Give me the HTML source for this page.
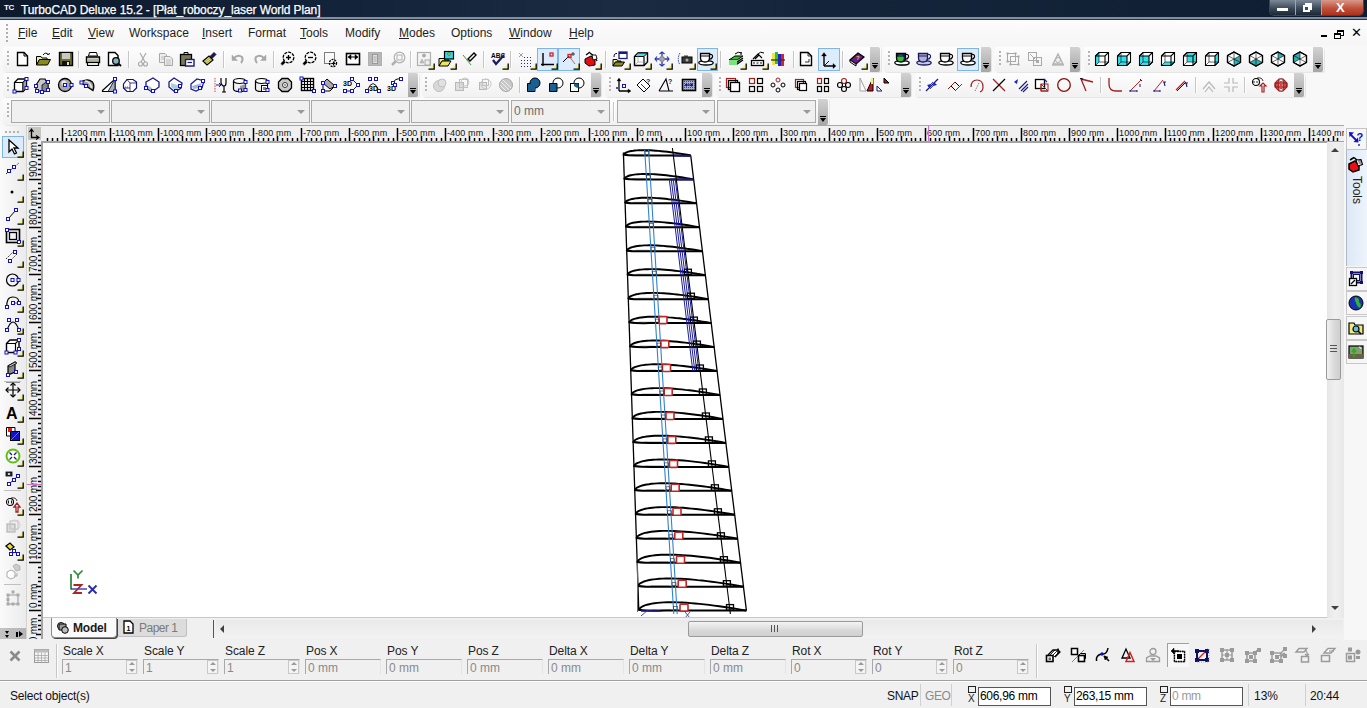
<!DOCTYPE html><html><head><meta charset="utf-8"><style>
*{box-sizing:border-box}
body{margin:0;width:1367px;height:708px;overflow:hidden;position:relative;background:#f0f0f0;font-family:"Liberation Sans",sans-serif;font-size:12px;color:#000}
.a{position:absolute}
.t{position:absolute;white-space:nowrap;line-height:1}
.ic{position:absolute;width:16px;height:16px;overflow:visible}
.grip{position:absolute;width:3px}
.sep{position:absolute;width:1px;background:#c8c8c8}
.hdl{position:absolute;width:10px;background:linear-gradient(#d2d2d2,#a6a6a6);border-radius:0 2px 2px 0}
.tb{position:absolute;background:linear-gradient(#fdfdfd,#f1f1f1);border-radius:3px;box-shadow:1px 1px 0 #e6e6e6}
.cb{position:absolute;height:23px;border:1px solid #a9a9a9;background:#f0f0f0}
.arr{position:absolute;width:0;height:0;border-left:4px solid transparent;border-right:4px solid transparent;border-top:4px solid #999}

</style></head><body>
<div class="a" style="left:0;top:0;width:1367px;height:17px;background:linear-gradient(90deg,#0d1a2d 0%,#13233a 25%,#1b2c42 45%,#14253b 60%,#0f1d31 100%)"></div>
<div class="a" style="left:0;top:17px;width:1367px;height:2px;background:#7f8fa1"></div>
<div class="a" style="left:0;top:19px;width:1367px;height:1px;background:#2a3442"></div>
<div class="t" style="left:4px;top:4px;font-size:8px;font-weight:700;color:#fff;letter-spacing:-0.5px">TC</div>
<div class="t" style="left:21px;top:4px;font-size:12px;color:#fff;letter-spacing:-0.1px;-webkit-text-stroke:0.25px #fff">TurboCAD Deluxe 15.2 - [Płat_roboczy_laser World Plan]</div>
<div class="a" style="left:1269px;top:0;width:95px;height:16px;border:1px solid #3a4656;border-top:none;border-radius:0 0 5px 5px;overflow:hidden"><div class="a" style="left:0;top:0;width:25px;height:15px;background:linear-gradient(#7a8898,#3c4a5a 55%,#1c2838)"></div><div class="a" style="left:25px;top:0;width:1px;height:15px;background:#9aa6b4"></div><div class="a" style="left:26px;top:0;width:25px;height:15px;background:linear-gradient(#7a8898,#3c4a5a 55%,#1c2838)"></div><div class="a" style="left:51px;top:0;width:1px;height:15px;background:#9aa6b4"></div><div class="a" style="left:52px;top:0;width:42px;height:15px;background:linear-gradient(#d89a8a,#c0503a 55%,#b0301a)"></div><div class="a" style="left:7px;top:8px;width:11px;height:3px;background:#fff"></div><div class="a" style="left:35px;top:3px;width:7px;height:7px;border:2px solid #fff"></div><div class="a" style="left:33px;top:5px;width:7px;height:7px;border:2px solid #fff;background:#3c4a5a"></div><div class="t" style="left:66px;top:1px;font-size:13px;font-weight:700;color:#fff">X</div></div>
<div class="a" style="left:0;top:20px;width:1367px;height:26px;background:linear-gradient(#fcfcfc,#f6f6f6)"></div>
<div class="a" style="left:6px;top:24px;width:2px;height:2px;background:#aeaeae"></div><div class="a" style="left:6px;top:28px;width:2px;height:2px;background:#aeaeae"></div><div class="a" style="left:6px;top:32px;width:2px;height:2px;background:#aeaeae"></div><div class="a" style="left:6px;top:36px;width:2px;height:2px;background:#aeaeae"></div><div class="a" style="left:6px;top:40px;width:2px;height:2px;background:#aeaeae"></div>
<div class="t" style="left:18px;top:27px;font-size:12px;color:#1e1e1e"><u>F</u>ile</div>
<div class="t" style="left:52px;top:27px;font-size:12px;color:#1e1e1e"><u>E</u>dit</div>
<div class="t" style="left:88px;top:27px;font-size:12px;color:#1e1e1e"><u>V</u>iew</div>
<div class="t" style="left:129px;top:27px;font-size:12px;color:#1e1e1e">Workspace</div>
<div class="t" style="left:202px;top:27px;font-size:12px;color:#1e1e1e"><u>I</u>nsert</div>
<div class="t" style="left:248px;top:27px;font-size:12px;color:#1e1e1e">Format</div>
<div class="t" style="left:300px;top:27px;font-size:12px;color:#1e1e1e"><u>T</u>ools</div>
<div class="t" style="left:345px;top:27px;font-size:12px;color:#1e1e1e">Modify</div>
<div class="t" style="left:399px;top:27px;font-size:12px;color:#1e1e1e"><u>M</u>odes</div>
<div class="t" style="left:451px;top:27px;font-size:12px;color:#1e1e1e">Options</div>
<div class="t" style="left:509px;top:27px;font-size:12px;color:#1e1e1e"><u>W</u>indow</div>
<div class="t" style="left:569px;top:27px;font-size:12px;color:#1e1e1e"><u>H</u>elp</div>
<div class="a" style="left:1321px;top:35px;width:6px;height:2px;background:#000"></div>
<div class="a" style="left:1337px;top:30px;width:7px;height:6px;border:1.5px solid #000;border-top-width:2px"></div>
<div class="a" style="left:1334px;top:33px;width:7px;height:6px;border:1.5px solid #000;border-top-width:2px;background:#f7f7f7"></div>
<div class="t" style="left:1351px;top:26px;font-size:13px;color:#000">✕</div>
<div class="a" style="left:0;top:46px;width:1367px;height:80px;background:#f8f8f8"></div>
<div class="tb" style="left:3px;top:47px;width:878px;height:25px"></div>
<div class="hdl" style="left:870px;top:47px;height:25px"></div>
<div class="a" style="left:872px;top:63px;width:6px;height:1px;background:#000"></div>
<div class="a" style="left:872px;top:65px;width:0;height:0;border-left:3px solid transparent;border-right:3px solid transparent;border-top:4px solid #000"></div>
<div class="a" style="left:7px;top:51px;width:2px;height:2px;background:#b4b4b4"></div>
<div class="a" style="left:7px;top:55px;width:2px;height:2px;background:#b4b4b4"></div>
<div class="a" style="left:7px;top:59px;width:2px;height:2px;background:#b4b4b4"></div>
<div class="a" style="left:7px;top:63px;width:2px;height:2px;background:#b4b4b4"></div>
<div class="tb" style="left:884px;top:47px;width:107px;height:25px"></div>
<div class="hdl" style="left:981px;top:47px;height:25px"></div>
<div class="a" style="left:983px;top:63px;width:6px;height:1px;background:#000"></div>
<div class="a" style="left:983px;top:65px;width:0;height:0;border-left:3px solid transparent;border-right:3px solid transparent;border-top:4px solid #000"></div>
<div class="a" style="left:888px;top:51px;width:2px;height:2px;background:#b4b4b4"></div>
<div class="a" style="left:888px;top:55px;width:2px;height:2px;background:#b4b4b4"></div>
<div class="a" style="left:888px;top:59px;width:2px;height:2px;background:#b4b4b4"></div>
<div class="a" style="left:888px;top:63px;width:2px;height:2px;background:#b4b4b4"></div>
<div class="tb" style="left:995px;top:47px;width:85px;height:25px"></div>
<div class="hdl" style="left:1070px;top:47px;height:25px"></div>
<div class="a" style="left:1072px;top:63px;width:6px;height:1px;background:#000"></div>
<div class="a" style="left:1072px;top:65px;width:0;height:0;border-left:3px solid transparent;border-right:3px solid transparent;border-top:4px solid #000"></div>
<div class="a" style="left:999px;top:51px;width:2px;height:2px;background:#b4b4b4"></div>
<div class="a" style="left:999px;top:55px;width:2px;height:2px;background:#b4b4b4"></div>
<div class="a" style="left:999px;top:59px;width:2px;height:2px;background:#b4b4b4"></div>
<div class="a" style="left:999px;top:63px;width:2px;height:2px;background:#b4b4b4"></div>
<div class="tb" style="left:1084px;top:47px;width:240px;height:25px"></div>
<div class="hdl" style="left:1313px;top:47px;height:25px"></div>
<div class="a" style="left:1315px;top:63px;width:6px;height:1px;background:#000"></div>
<div class="a" style="left:1315px;top:65px;width:0;height:0;border-left:3px solid transparent;border-right:3px solid transparent;border-top:4px solid #000"></div>
<div class="a" style="left:1088px;top:51px;width:2px;height:2px;background:#b4b4b4"></div>
<div class="a" style="left:1088px;top:55px;width:2px;height:2px;background:#b4b4b4"></div>
<div class="a" style="left:1088px;top:59px;width:2px;height:2px;background:#b4b4b4"></div>
<div class="a" style="left:1088px;top:63px;width:2px;height:2px;background:#b4b4b4"></div>
<div class="tb" style="left:3px;top:73px;width:416px;height:24px"></div>
<div class="hdl" style="left:408px;top:73px;height:24px"></div>
<div class="a" style="left:410px;top:88px;width:6px;height:1px;background:#000"></div>
<div class="a" style="left:410px;top:90px;width:0;height:0;border-left:3px solid transparent;border-right:3px solid transparent;border-top:4px solid #000"></div>
<div class="a" style="left:7px;top:77px;width:2px;height:2px;background:#b4b4b4"></div>
<div class="a" style="left:7px;top:81px;width:2px;height:2px;background:#b4b4b4"></div>
<div class="a" style="left:7px;top:85px;width:2px;height:2px;background:#b4b4b4"></div>
<div class="a" style="left:7px;top:89px;width:2px;height:2px;background:#b4b4b4"></div>
<div class="tb" style="left:422px;top:73px;width:179px;height:24px"></div>
<div class="hdl" style="left:591px;top:73px;height:24px"></div>
<div class="a" style="left:593px;top:88px;width:6px;height:1px;background:#000"></div>
<div class="a" style="left:593px;top:90px;width:0;height:0;border-left:3px solid transparent;border-right:3px solid transparent;border-top:4px solid #000"></div>
<div class="a" style="left:425px;top:77px;width:2px;height:2px;background:#b4b4b4"></div>
<div class="a" style="left:425px;top:81px;width:2px;height:2px;background:#b4b4b4"></div>
<div class="a" style="left:425px;top:85px;width:2px;height:2px;background:#b4b4b4"></div>
<div class="a" style="left:425px;top:89px;width:2px;height:2px;background:#b4b4b4"></div>
<div class="tb" style="left:605px;top:73px;width:107px;height:24px"></div>
<div class="hdl" style="left:702px;top:73px;height:24px"></div>
<div class="a" style="left:704px;top:88px;width:6px;height:1px;background:#000"></div>
<div class="a" style="left:704px;top:90px;width:0;height:0;border-left:3px solid transparent;border-right:3px solid transparent;border-top:4px solid #000"></div>
<div class="a" style="left:609px;top:77px;width:2px;height:2px;background:#b4b4b4"></div>
<div class="a" style="left:609px;top:81px;width:2px;height:2px;background:#b4b4b4"></div>
<div class="a" style="left:609px;top:85px;width:2px;height:2px;background:#b4b4b4"></div>
<div class="a" style="left:609px;top:89px;width:2px;height:2px;background:#b4b4b4"></div>
<div class="tb" style="left:716px;top:73px;width:195px;height:24px"></div>
<div class="hdl" style="left:901px;top:73px;height:24px"></div>
<div class="a" style="left:903px;top:88px;width:6px;height:1px;background:#000"></div>
<div class="a" style="left:903px;top:90px;width:0;height:0;border-left:3px solid transparent;border-right:3px solid transparent;border-top:4px solid #000"></div>
<div class="a" style="left:719px;top:77px;width:2px;height:2px;background:#b4b4b4"></div>
<div class="a" style="left:719px;top:81px;width:2px;height:2px;background:#b4b4b4"></div>
<div class="a" style="left:719px;top:85px;width:2px;height:2px;background:#b4b4b4"></div>
<div class="a" style="left:719px;top:89px;width:2px;height:2px;background:#b4b4b4"></div>
<div class="tb" style="left:915px;top:73px;width:390px;height:24px"></div>
<div class="hdl" style="left:1294px;top:73px;height:24px"></div>
<div class="a" style="left:1296px;top:88px;width:6px;height:1px;background:#000"></div>
<div class="a" style="left:1296px;top:90px;width:0;height:0;border-left:3px solid transparent;border-right:3px solid transparent;border-top:4px solid #000"></div>
<div class="a" style="left:919px;top:77px;width:2px;height:2px;background:#b4b4b4"></div>
<div class="a" style="left:919px;top:81px;width:2px;height:2px;background:#b4b4b4"></div>
<div class="a" style="left:919px;top:85px;width:2px;height:2px;background:#b4b4b4"></div>
<div class="a" style="left:919px;top:89px;width:2px;height:2px;background:#b4b4b4"></div>
<div class="a" style="left:78px;top:51px;width:1px;height:17px;background:#c6c6c6"></div>
<div class="a" style="left:79px;top:51px;width:1px;height:17px;background:#fff"></div>
<div class="a" style="left:128px;top:51px;width:1px;height:17px;background:#c6c6c6"></div>
<div class="a" style="left:129px;top:51px;width:1px;height:17px;background:#fff"></div>
<div class="a" style="left:223px;top:51px;width:1px;height:17px;background:#c6c6c6"></div>
<div class="a" style="left:224px;top:51px;width:1px;height:17px;background:#fff"></div>
<div class="a" style="left:273px;top:51px;width:1px;height:17px;background:#c6c6c6"></div>
<div class="a" style="left:274px;top:51px;width:1px;height:17px;background:#fff"></div>
<div class="a" style="left:410px;top:51px;width:1px;height:17px;background:#c6c6c6"></div>
<div class="a" style="left:411px;top:51px;width:1px;height:17px;background:#fff"></div>
<div class="a" style="left:483px;top:51px;width:1px;height:17px;background:#c6c6c6"></div>
<div class="a" style="left:484px;top:51px;width:1px;height:17px;background:#fff"></div>
<div class="a" style="left:510px;top:51px;width:1px;height:17px;background:#c6c6c6"></div>
<div class="a" style="left:511px;top:51px;width:1px;height:17px;background:#fff"></div>
<div class="a" style="left:605px;top:51px;width:1px;height:17px;background:#c6c6c6"></div>
<div class="a" style="left:606px;top:51px;width:1px;height:17px;background:#fff"></div>
<div class="a" style="left:720px;top:51px;width:1px;height:17px;background:#c6c6c6"></div>
<div class="a" style="left:721px;top:51px;width:1px;height:17px;background:#fff"></div>
<div class="a" style="left:793px;top:51px;width:1px;height:17px;background:#c6c6c6"></div>
<div class="a" style="left:794px;top:51px;width:1px;height:17px;background:#fff"></div>
<div class="a" style="left:842px;top:51px;width:1px;height:17px;background:#c6c6c6"></div>
<div class="a" style="left:843px;top:51px;width:1px;height:17px;background:#fff"></div>
<div class="a" style="left:519px;top:77px;width:1px;height:16px;background:#c6c6c6"></div>
<div class="a" style="left:520px;top:77px;width:1px;height:16px;background:#fff"></div>
<div class="a" style="left:1100px;top:77px;width:1px;height:16px;background:#c6c6c6"></div>
<div class="a" style="left:1101px;top:77px;width:1px;height:16px;background:#fff"></div>
<div class="a" style="left:1195px;top:77px;width:1px;height:16px;background:#c6c6c6"></div>
<div class="a" style="left:1196px;top:77px;width:1px;height:16px;background:#fff"></div>
<div class="a" style="left:1244px;top:77px;width:1px;height:16px;background:#c6c6c6"></div>
<div class="a" style="left:1245px;top:77px;width:1px;height:16px;background:#fff"></div>
<div class="a" style="left:537px;top:48px;width:21px;height:23px;border:1px solid #7eb4ea;background:#dcecfc"></div>
<div class="a" style="left:558px;top:48px;width:22px;height:23px;border:1px solid #7eb4ea;background:#dcecfc"></div>
<div class="a" style="left:697px;top:48px;width:21px;height:23px;border:1px solid #7eb4ea;background:#dcecfc"></div>
<div class="a" style="left:818px;top:48px;width:22px;height:23px;border:1px solid #7eb4ea;background:#dcecfc"></div>
<div class="a" style="left:957px;top:48px;width:22px;height:23px;border:1px solid #7eb4ea;background:#dcecfc"></div>
<div class="tb" style="left:3px;top:98px;width:826px;height:27px"></div>
<div class="a" style="left:7px;top:103px;width:2px;height:2px;background:#b4b4b4"></div>
<div class="a" style="left:7px;top:107px;width:2px;height:2px;background:#b4b4b4"></div>
<div class="a" style="left:7px;top:111px;width:2px;height:2px;background:#b4b4b4"></div>
<div class="a" style="left:7px;top:115px;width:2px;height:2px;background:#b4b4b4"></div>
<div class="cb" style="left:11px;top:100px;width:99px"></div>
<div class="arr" style="left:97px;top:110px"></div>
<div class="cb" style="left:111px;top:100px;width:99px"></div>
<div class="arr" style="left:197px;top:110px"></div>
<div class="cb" style="left:211px;top:100px;width:99px"></div>
<div class="arr" style="left:297px;top:110px"></div>
<div class="cb" style="left:311px;top:100px;width:99px"></div>
<div class="arr" style="left:397px;top:110px"></div>
<div class="cb" style="left:411px;top:100px;width:98px"></div>
<div class="arr" style="left:496px;top:110px"></div>
<div class="cb" style="left:511px;top:100px;width:99px"></div>
<div class="arr" style="left:597px;top:110px"></div>
<div class="t" style="left:514px;top:105px;font-size:12px;color:#6d6d6d">0 mm</div>
<div class="cb" style="left:617px;top:100px;width:98px"></div>
<div class="arr" style="left:702px;top:110px"></div>
<div class="cb" style="left:717px;top:100px;width:99px"></div>
<div class="arr" style="left:803px;top:110px"></div>
<div class="a" style="left:613px;top:102px;width:1px;height:19px;background:#c6c6c6"></div>
<div class="a" style="left:614px;top:102px;width:1px;height:19px;background:#fff"></div>
<div class="hdl" style="left:818px;top:99px;height:26px"></div>
<div class="a" style="left:820px;top:116px;width:6px;height:1px;background:#000"></div>
<div class="a" style="left:820px;top:118px;width:0;height:0;border-left:3px solid transparent;border-right:3px solid transparent;border-top:4px solid #000"></div>
<div class="a" style="left:0;top:126px;width:1367px;height:513px;background:#f0f0f0"></div>
<div class="a" style="left:41px;top:141px;width:1286px;height:477px;background:#fff;border-left:2px solid #a3a3a3;border-top:2px solid #a3a3a3"></div>
<svg class="a" style="left:0;top:126px" width="1346" height="16"><rect x="27" y="0" width="1317" height="16" fill="#f0f0f0"/><rect x="28" y="1" width="13" height="13" fill="#c4c6c0"/><path d="M31.5 4 V11.5 H38" fill="none" stroke="#000" stroke-width="1.3"/><path d="M29.5 6 L31.5 3 L33.5 6 M36 9.5 L39 11.5 L36 13.5" fill="none" stroke="#000" stroke-width="1.2"/><path d="M47.5 12V15M52.5 12V15M57.5 12V15M62.5 2V15M66.5 12V15M71.5 12V15M76.5 12V15M81.5 12V15M86.5 10V15M90.5 12V15M95.5 12V15M100.5 12V15M105.5 12V15M110.5 2V15M114.5 12V15M119.5 12V15M124.5 12V15M129.5 12V15M134.5 10V15M138.5 12V15M143.5 12V15M148.5 12V15M153.5 12V15M158.5 2V15M162.5 12V15M167.5 12V15M172.5 12V15M177.5 12V15M182.5 10V15M186.5 12V15M191.5 12V15M196.5 12V15M201.5 12V15M206.5 2V15M210.5 12V15M215.5 12V15M220.5 12V15M225.5 12V15M230.5 10V15M234.5 12V15M239.5 12V15M244.5 12V15M249.5 12V15M253.5 2V15M258.5 12V15M263.5 12V15M268.5 12V15M273.5 12V15M277.5 10V15M282.5 12V15M287.5 12V15M292.5 12V15M297.5 12V15M301.5 2V15M306.5 12V15M311.5 12V15M316.5 12V15M321.5 12V15M325.5 10V15M330.5 12V15M335.5 12V15M340.5 12V15M345.5 12V15M349.5 2V15M354.5 12V15M359.5 12V15M364.5 12V15M369.5 12V15M373.5 10V15M378.5 12V15M383.5 12V15M388.5 12V15M393.5 12V15M397.5 2V15M402.5 12V15M407.5 12V15M412.5 12V15M417.5 12V15M421.5 10V15M426.5 12V15M431.5 12V15M436.5 12V15M441.5 12V15M445.5 2V15M450.5 12V15M455.5 12V15M460.5 12V15M465.5 12V15M469.5 10V15M474.5 12V15M479.5 12V15M484.5 12V15M488.5 12V15M493.5 2V15M498.5 12V15M503.5 12V15M508.5 12V15M512.5 12V15M517.5 10V15M522.5 12V15M527.5 12V15M532.5 12V15M536.5 12V15M541.5 2V15M546.5 12V15M551.5 12V15M556.5 12V15M560.5 12V15M565.5 10V15M570.5 12V15M575.5 12V15M580.5 12V15M584.5 12V15M589.5 2V15M594.5 12V15M599.5 12V15M604.5 12V15M608.5 12V15M613.5 10V15M618.5 12V15M623.5 12V15M628.5 12V15M632.5 12V15M637.5 2V15M642.5 12V15M647.5 12V15M652.5 12V15M656.5 12V15M661.5 10V15M666.5 12V15M671.5 12V15M676.5 12V15M680.5 12V15M685.5 2V15M690.5 12V15M695.5 12V15M700.5 12V15M704.5 12V15M709.5 10V15M714.5 12V15M719.5 12V15M723.5 12V15M728.5 12V15M733.5 2V15M738.5 12V15M743.5 12V15M747.5 12V15M752.5 12V15M757.5 10V15M762.5 12V15M767.5 12V15M771.5 12V15M776.5 12V15M781.5 2V15M786.5 12V15M791.5 12V15M795.5 12V15M800.5 12V15M805.5 10V15M810.5 12V15M815.5 12V15M819.5 12V15M824.5 12V15M829.5 2V15M834.5 12V15M839.5 12V15M843.5 12V15M848.5 12V15M853.5 10V15M858.5 12V15M863.5 12V15M867.5 12V15M872.5 12V15M877.5 2V15M882.5 12V15M887.5 12V15M891.5 12V15M896.5 12V15M901.5 10V15M906.5 12V15M911.5 12V15M915.5 12V15M920.5 12V15M925.5 2V15M930.5 12V15M935.5 12V15M939.5 12V15M944.5 12V15M949.5 10V15M954.5 12V15M959.5 12V15M963.5 12V15M968.5 12V15M973.5 2V15M978.5 12V15M982.5 12V15M987.5 12V15M992.5 12V15M997.5 10V15M1002.5 12V15M1006.5 12V15M1011.5 12V15M1016.5 12V15M1021.5 2V15M1026.5 12V15M1030.5 12V15M1035.5 12V15M1040.5 12V15M1045.5 10V15M1050.5 12V15M1054.5 12V15M1059.5 12V15M1064.5 12V15M1069.5 2V15M1074.5 12V15M1078.5 12V15M1083.5 12V15M1088.5 12V15M1093.5 10V15M1098.5 12V15M1102.5 12V15M1107.5 12V15M1112.5 12V15M1117.5 2V15M1122.5 12V15M1126.5 12V15M1131.5 12V15M1136.5 12V15M1141.5 10V15M1146.5 12V15M1150.5 12V15M1155.5 12V15M1160.5 12V15M1165.5 2V15M1170.5 12V15M1174.5 12V15M1179.5 12V15M1184.5 12V15M1189.5 10V15M1194.5 12V15M1198.5 12V15M1203.5 12V15M1208.5 12V15M1213.5 2V15M1217.5 12V15M1222.5 12V15M1227.5 12V15M1232.5 12V15M1237.5 10V15M1241.5 12V15M1246.5 12V15M1251.5 12V15M1256.5 12V15M1261.5 2V15M1265.5 12V15M1270.5 12V15M1275.5 12V15M1280.5 12V15M1285.5 10V15M1289.5 12V15M1294.5 12V15M1299.5 12V15M1304.5 12V15M1309.5 2V15M1313.5 12V15M1318.5 12V15M1323.5 12V15M1328.5 12V15M1333.5 10V15M1337.5 12V15" stroke="#000" stroke-width="1.5"/><rect x="41" y="15" width="1303" height="1" fill="#a3a3a3"/><text x="64" y="9.5" font-family="Liberation Sans" font-size="9" letter-spacing="0.12" fill="#111">-1200 mm</text><text x="112" y="9.5" font-family="Liberation Sans" font-size="9" letter-spacing="0.12" fill="#111">-1100 mm</text><text x="160" y="9.5" font-family="Liberation Sans" font-size="9" letter-spacing="0.12" fill="#111">-1000 mm</text><text x="208" y="9.5" font-family="Liberation Sans" font-size="9" letter-spacing="0.12" fill="#111">-900 mm</text><text x="255" y="9.5" font-family="Liberation Sans" font-size="9" letter-spacing="0.12" fill="#111">-800 mm</text><text x="303" y="9.5" font-family="Liberation Sans" font-size="9" letter-spacing="0.12" fill="#111">-700 mm</text><text x="351" y="9.5" font-family="Liberation Sans" font-size="9" letter-spacing="0.12" fill="#111">-600 mm</text><text x="399" y="9.5" font-family="Liberation Sans" font-size="9" letter-spacing="0.12" fill="#111">-500 mm</text><text x="447" y="9.5" font-family="Liberation Sans" font-size="9" letter-spacing="0.12" fill="#111">-400 mm</text><text x="495" y="9.5" font-family="Liberation Sans" font-size="9" letter-spacing="0.12" fill="#111">-300 mm</text><text x="543" y="9.5" font-family="Liberation Sans" font-size="9" letter-spacing="0.12" fill="#111">-200 mm</text><text x="591" y="9.5" font-family="Liberation Sans" font-size="9" letter-spacing="0.12" fill="#111">-100 mm</text><text x="639" y="9.5" font-family="Liberation Sans" font-size="9" letter-spacing="0.12" fill="#111">0 mm</text><text x="687" y="9.5" font-family="Liberation Sans" font-size="9" letter-spacing="0.12" fill="#111">100 mm</text><text x="735" y="9.5" font-family="Liberation Sans" font-size="9" letter-spacing="0.12" fill="#111">200 mm</text><text x="783" y="9.5" font-family="Liberation Sans" font-size="9" letter-spacing="0.12" fill="#111">300 mm</text><text x="831" y="9.5" font-family="Liberation Sans" font-size="9" letter-spacing="0.12" fill="#111">400 mm</text><text x="879" y="9.5" font-family="Liberation Sans" font-size="9" letter-spacing="0.12" fill="#111">500 mm</text><text x="927" y="9.5" font-family="Liberation Sans" font-size="9" letter-spacing="0.12" fill="#111">600 mm</text><text x="975" y="9.5" font-family="Liberation Sans" font-size="9" letter-spacing="0.12" fill="#111">700 mm</text><text x="1023" y="9.5" font-family="Liberation Sans" font-size="9" letter-spacing="0.12" fill="#111">800 mm</text><text x="1071" y="9.5" font-family="Liberation Sans" font-size="9" letter-spacing="0.12" fill="#111">900 mm</text><text x="1119" y="9.5" font-family="Liberation Sans" font-size="9" letter-spacing="0.12" fill="#111">1000 mm</text><text x="1167" y="9.5" font-family="Liberation Sans" font-size="9" letter-spacing="0.12" fill="#111">1100 mm</text><text x="1215" y="9.5" font-family="Liberation Sans" font-size="9" letter-spacing="0.12" fill="#111">1200 mm</text><text x="1263" y="9.5" font-family="Liberation Sans" font-size="9" letter-spacing="0.12" fill="#111">1300 mm</text><text x="1311" y="9.5" font-family="Liberation Sans" font-size="9" letter-spacing="0.12" fill="#111">1400 mm</text></svg>
<svg class="a" style="left:27px;top:141px" width="16" height="498"><rect x="0" y="0" width="14" height="498" fill="#f0f0f0"/><path d="M9 493.5H14M11 488.5H14M11 484.5H14M11 479.5H14M11 474.5H14M2 469.5H14M11 464.5H14M11 460.5H14M11 455.5H14M11 450.5H14M9 445.5H14M11 440.5H14M11 436.5H14M11 431.5H14M11 426.5H14M2 421.5H14M11 416.5H14M11 412.5H14M11 407.5H14M11 402.5H14M9 397.5H14M11 392.5H14M11 388.5H14M11 383.5H14M11 378.5H14M2 373.5H14M11 368.5H14M11 364.5H14M11 359.5H14M11 354.5H14M9 349.5H14M11 345.5H14M11 340.5H14M11 335.5H14M11 330.5H14M2 325.5H14M11 321.5H14M11 316.5H14M11 311.5H14M11 306.5H14M9 301.5H14M11 297.5H14M11 292.5H14M11 287.5H14M11 282.5H14M2 277.5H14M11 273.5H14M11 268.5H14M11 263.5H14M11 258.5H14M9 253.5H14M11 249.5H14M11 244.5H14M11 239.5H14M11 234.5H14M2 229.5H14M11 225.5H14M11 220.5H14M11 215.5H14M11 210.5H14M9 205.5H14M11 201.5H14M11 196.5H14M11 191.5H14M11 186.5H14M2 181.5H14M11 177.5H14M11 172.5H14M11 167.5H14M11 162.5H14M9 157.5H14M11 153.5H14M11 148.5H14M11 143.5H14M11 138.5H14M2 133.5H14M11 129.5H14M11 124.5H14M11 119.5H14M11 114.5H14M9 110.5H14M11 105.5H14M11 100.5H14M11 95.5H14M11 90.5H14M2 86.5H14M11 81.5H14M11 76.5H14M11 71.5H14M11 66.5H14M9 62.5H14M11 57.5H14M11 52.5H14M11 47.5H14M11 42.5H14M2 38.5H14M11 33.5H14M11 28.5H14M11 23.5H14M11 18.5H14M9 14.5H14M11 9.5H14M11 4.5H14" stroke="#000" stroke-width="1.5"/><rect x="14" y="0" width="2" height="498" fill="#a3a3a3"/><text x="0" y="0" transform="translate(10 515) rotate(-90)" font-family="Liberation Sans" font-size="10" letter-spacing="-0.2" fill="#111">-100 mm</text><text x="0" y="0" transform="translate(10 467) rotate(-90)" font-family="Liberation Sans" font-size="10" letter-spacing="-0.2" fill="#111">0 mm</text><text x="0" y="0" transform="translate(10 419) rotate(-90)" font-family="Liberation Sans" font-size="10" letter-spacing="-0.2" fill="#111">100 mm</text><text x="0" y="0" transform="translate(10 371) rotate(-90)" font-family="Liberation Sans" font-size="10" letter-spacing="-0.2" fill="#111">200 mm</text><text x="0" y="0" transform="translate(10 323) rotate(-90)" font-family="Liberation Sans" font-size="10" letter-spacing="-0.2" fill="#111">300 mm</text><text x="0" y="0" transform="translate(10 275) rotate(-90)" font-family="Liberation Sans" font-size="10" letter-spacing="-0.2" fill="#111">400 mm</text><text x="0" y="0" transform="translate(10 227) rotate(-90)" font-family="Liberation Sans" font-size="10" letter-spacing="-0.2" fill="#111">500 mm</text><text x="0" y="0" transform="translate(10 179) rotate(-90)" font-family="Liberation Sans" font-size="10" letter-spacing="-0.2" fill="#111">600 mm</text><text x="0" y="0" transform="translate(10 131) rotate(-90)" font-family="Liberation Sans" font-size="10" letter-spacing="-0.2" fill="#111">700 mm</text><text x="0" y="0" transform="translate(10 84) rotate(-90)" font-family="Liberation Sans" font-size="10" letter-spacing="-0.2" fill="#111">800 mm</text><text x="0" y="0" transform="translate(10 36) rotate(-90)" font-family="Liberation Sans" font-size="10" letter-spacing="-0.2" fill="#111">900 mm</text><text x="0" y="0" transform="translate(10 -12) rotate(-90)" font-family="Liberation Sans" font-size="10" letter-spacing="-0.2" fill="#111">1000 mm</text></svg>
<div class="a" style="left:26px;top:125px;width:1318px;height:1px;background:#a8a8a8"></div>
<div class="a" style="left:26px;top:125px;width:1px;height:514px;background:#b8b8b8"></div>
<div class="a" style="left:928px;top:126px;width:1px;height:15px;background:#d070d0"></div>
<div class="a" style="left:27px;top:484px;width:14px;height:1px;background:#d070d0"></div>
<div class="a" style="left:1327px;top:143px;width:17px;height:475px;background:linear-gradient(90deg,#e6e6e6,#f0f0f0 50%,#e8e8e8)"></div>
<div class="a" style="left:1331px;top:148px;width:0;height:0;border-left:4px solid transparent;border-right:4px solid transparent;border-bottom:4px solid #404040"></div>
<div class="a" style="left:1331px;top:606px;width:0;height:0;border-left:4px solid transparent;border-right:4px solid transparent;border-top:4px solid #404040"></div>
<div class="a" style="left:1326px;top:319px;width:15px;height:61px;border:1px solid #9a9a9a;border-radius:2px;background:linear-gradient(90deg,#f2f2f2,#d8d8d8 60%,#cfcfcf)"></div>
<div class="a" style="left:1330px;top:345px;width:7px;height:1px;background:#555"></div>
<div class="a" style="left:1330px;top:348px;width:7px;height:1px;background:#555"></div>
<div class="a" style="left:1330px;top:351px;width:7px;height:1px;background:#555"></div>
<svg class="a" style="left:0;top:0" width="1367" height="708"><defs><clipPath id="dc"><rect x="43" y="143" width="1283" height="474"/></clipPath></defs><g clip-path="url(#dc)"><path d="M623.4 152.4 L638.8 610.6" stroke="#000" stroke-width="1.3" fill="none"/><path d="M690.7 155.4 L746.4 610.6" stroke="#000" stroke-width="1.3" fill="none"/><path d="M623.4 155.4 L623.7 154.4 L624.3 153.7 L625.1 153.1 L626.1 152.6 L627.2 152.1 L628.5 151.7 L630.0 151.3 L631.5 151.0 L633.2 150.8 L635.0 150.5 L636.9 150.4 L638.9 150.3 L641.1 150.2 L643.3 150.2 L645.6 150.2 L648.0 150.2 L650.5 150.3 L653.1 150.5 L655.8 150.7 L658.6 150.9 L661.4 151.2 L664.4 151.5 L667.4 151.8 L670.5 152.2 L673.7 152.6 L676.9 153.1 L680.3 153.6 L683.7 154.2 L687.1 154.8 L690.7 155.4" stroke="#000" stroke-width="1.9" fill="none"/><path d="M623.4 154.6 Q628.8 155.7 640.2 155.4 L690.7 155.4" stroke="#000" stroke-width="2" fill="none"/><path d="M631.5 154.4 L643.6 154.4" stroke="#000" stroke-width="0.6" fill="none" opacity="0.5"/><path d="M624.2 179.4 L624.5 178.3 L625.1 177.6 L626.0 177.0 L627.0 176.5 L628.2 176.0 L629.5 175.5 L631.0 175.2 L632.6 174.9 L634.3 174.6 L636.2 174.4 L638.2 174.2 L640.2 174.1 L642.4 174.0 L644.7 173.9 L647.1 174.0 L649.6 174.0 L652.2 174.1 L654.9 174.3 L657.6 174.5 L660.5 174.7 L663.4 175.0 L666.5 175.3 L669.6 175.7 L672.8 176.1 L676.1 176.5 L679.4 177.0 L682.9 177.5 L686.4 178.1 L690.0 178.7 L693.6 179.4" stroke="#000" stroke-width="1.9" fill="none"/><path d="M624.2 178.6 Q629.8 179.7 641.6 179.4 L693.6 179.4" stroke="#000" stroke-width="2" fill="none"/><path d="M632.5 178.4 L645.0 178.4" stroke="#000" stroke-width="0.6" fill="none" opacity="0.5"/><path d="M625.0 203.3 L625.3 202.3 L626.0 201.5 L626.8 200.9 L627.9 200.3 L629.1 199.8 L630.5 199.4 L632.0 199.0 L633.7 198.7 L635.4 198.4 L637.4 198.2 L639.4 198.0 L641.5 197.8 L643.8 197.8 L646.2 197.7 L648.6 197.8 L651.2 197.8 L653.9 197.9 L656.6 198.1 L659.5 198.3 L662.4 198.5 L665.5 198.8 L668.6 199.2 L671.8 199.5 L675.1 199.9 L678.5 200.4 L681.9 200.9 L685.5 201.4 L689.1 202.0 L692.8 202.6 L696.6 203.3" stroke="#000" stroke-width="1.9" fill="none"/><path d="M625.0 202.5 Q630.7 203.6 642.9 203.3 L696.6 203.3" stroke="#000" stroke-width="2" fill="none"/><path d="M633.6 202.3 L646.5 202.3" stroke="#000" stroke-width="0.6" fill="none" opacity="0.5"/><path d="M625.8 227.3 L626.2 226.2 L626.8 225.4 L627.7 224.8 L628.8 224.2 L630.0 223.7 L631.4 223.2 L633.0 222.8 L634.7 222.5 L636.6 222.2 L638.5 222.0 L640.6 221.8 L642.8 221.6 L645.2 221.6 L647.6 221.5 L650.1 221.6 L652.8 221.6 L655.5 221.7 L658.4 221.9 L661.3 222.1 L664.3 222.4 L667.5 222.7 L670.7 223.0 L674.0 223.4 L677.4 223.8 L680.9 224.3 L684.4 224.8 L688.1 225.3 L691.8 225.9 L695.6 226.6 L699.5 227.3" stroke="#000" stroke-width="1.9" fill="none"/><path d="M625.8 226.5 Q631.7 227.6 644.2 227.3 L699.5 227.3" stroke="#000" stroke-width="2" fill="none"/><path d="M634.7 226.3 L647.9 226.3" stroke="#000" stroke-width="0.6" fill="none" opacity="0.5"/><path d="M626.6 251.2 L627.0 250.1 L627.6 249.3 L628.5 248.7 L629.7 248.1 L631.0 247.5 L632.4 247.1 L634.0 246.7 L635.8 246.3 L637.7 246.0 L639.7 245.8 L641.9 245.6 L644.1 245.4 L646.5 245.4 L649.0 245.3 L651.6 245.3 L654.4 245.4 L657.2 245.5 L660.1 245.7 L663.1 245.9 L666.3 246.2 L669.5 246.5 L672.8 246.8 L676.2 247.2 L679.7 247.7 L683.3 248.1 L686.9 248.7 L690.7 249.2 L694.5 249.8 L698.4 250.5 L702.4 251.2" stroke="#000" stroke-width="1.9" fill="none"/><path d="M626.6 250.4 Q632.7 251.5 645.6 251.2 L702.4 251.2" stroke="#000" stroke-width="2" fill="none"/><path d="M635.7 250.2 L649.4 250.2" stroke="#000" stroke-width="0.6" fill="none" opacity="0.5"/><path d="M627.5 275.2 L627.8 274.0 L628.5 273.2 L629.4 272.5 L630.6 271.9 L631.9 271.4 L633.4 270.9 L635.0 270.5 L636.9 270.1 L638.8 269.8 L640.9 269.6 L643.1 269.4 L645.4 269.2 L647.9 269.2 L650.5 269.1 L653.2 269.1 L655.9 269.2 L658.8 269.3 L661.9 269.5 L665.0 269.7 L668.2 270.0 L671.5 270.3 L674.9 270.7 L678.4 271.1 L682.0 271.5 L685.6 272.0 L689.4 272.5 L693.3 273.1 L697.2 273.8 L701.2 274.4 L705.4 275.2" stroke="#000" stroke-width="1.9" fill="none"/><path d="M627.5 274.4 Q633.7 275.5 646.9 275.2 L705.4 275.2" stroke="#000" stroke-width="2" fill="none"/><path d="M636.8 274.2 L650.8 274.2" stroke="#000" stroke-width="0.6" fill="none" opacity="0.5"/><path d="M628.3 299.2 L628.6 298.0 L629.3 297.1 L630.3 296.4 L631.4 295.8 L632.8 295.3 L634.4 294.8 L636.1 294.3 L637.9 294.0 L639.9 293.6 L642.1 293.4 L644.3 293.2 L646.7 293.0 L649.3 293.0 L651.9 292.9 L654.7 292.9 L657.5 293.0 L660.5 293.1 L663.6 293.3 L666.8 293.5 L670.1 293.8 L673.5 294.1 L677.0 294.5 L680.6 294.9 L684.3 295.4 L688.0 295.9 L691.9 296.4 L695.9 297.0 L699.9 297.7 L704.1 298.4 L708.3 299.2" stroke="#000" stroke-width="1.9" fill="none"/><path d="M628.3 298.4 Q634.7 299.5 648.3 299.2 L708.3 299.2" stroke="#000" stroke-width="2" fill="none"/><path d="M637.9 298.2 L652.3 298.2" stroke="#000" stroke-width="0.6" fill="none" opacity="0.5"/><path d="M629.1 323.1 L629.4 321.9 L630.2 321.1 L631.1 320.3 L632.3 319.7 L633.7 319.1 L635.3 318.6 L637.1 318.2 L639.0 317.8 L641.0 317.5 L643.2 317.2 L645.6 317.0 L648.0 316.8 L650.6 316.7 L653.3 316.7 L656.2 316.7 L659.1 316.8 L662.2 316.9 L665.4 317.1 L668.6 317.4 L672.0 317.6 L675.5 318.0 L679.1 318.3 L682.8 318.8 L686.6 319.2 L690.4 319.8 L694.4 320.3 L698.5 320.9 L702.6 321.6 L706.9 322.3 L711.2 323.1" stroke="#000" stroke-width="1.9" fill="none"/><path d="M629.1 322.3 Q635.6 323.4 649.6 323.1 L711.2 323.1" stroke="#000" stroke-width="2" fill="none"/><path d="M638.9 322.1 L653.7 322.1" stroke="#000" stroke-width="0.6" fill="none" opacity="0.5"/><path d="M629.9 347.1 L630.2 345.8 L631.0 345.0 L632.0 344.2 L633.2 343.6 L634.7 343.0 L636.3 342.5 L638.1 342.0 L640.1 341.6 L642.2 341.3 L644.4 341.0 L646.8 340.8 L649.3 340.6 L652.0 340.5 L654.8 340.5 L657.7 340.5 L660.7 340.6 L663.8 340.7 L667.1 340.9 L670.5 341.2 L673.9 341.5 L677.5 341.8 L681.2 342.2 L685.0 342.6 L688.9 343.1 L692.8 343.6 L696.9 344.2 L701.1 344.8 L705.3 345.5 L709.7 346.3 L714.2 347.1" stroke="#000" stroke-width="1.9" fill="none"/><path d="M629.9 346.3 Q636.6 347.4 651.0 347.1 L714.2 347.1" stroke="#000" stroke-width="2" fill="none"/><path d="M640.0 346.1 L655.2 346.1" stroke="#000" stroke-width="0.6" fill="none" opacity="0.5"/><path d="M630.7 371.0 L631.1 369.8 L631.8 368.9 L632.9 368.1 L634.1 367.4 L635.6 366.8 L637.3 366.3 L639.1 365.8 L641.1 365.4 L643.3 365.1 L645.6 364.8 L648.0 364.6 L650.6 364.4 L653.4 364.3 L656.2 364.3 L659.2 364.3 L662.3 364.4 L665.5 364.5 L668.8 364.7 L672.3 365.0 L675.9 365.3 L679.5 365.6 L683.3 366.0 L687.2 366.5 L691.1 367.0 L695.2 367.5 L699.4 368.1 L703.7 368.7 L708.1 369.4 L712.5 370.2 L717.1 371.0" stroke="#000" stroke-width="1.9" fill="none"/><path d="M630.7 370.2 Q637.6 371.3 652.3 371.0 L717.1 371.0" stroke="#000" stroke-width="2" fill="none"/><path d="M641.1 370.0 L656.6 370.0" stroke="#000" stroke-width="0.6" fill="none" opacity="0.5"/><path d="M631.5 395.0 L631.9 393.7 L632.7 392.8 L633.7 392.0 L635.0 391.3 L636.5 390.7 L638.2 390.1 L640.1 389.7 L642.2 389.3 L644.4 388.9 L646.8 388.6 L649.3 388.4 L651.9 388.2 L654.7 388.1 L657.7 388.1 L660.7 388.1 L663.9 388.2 L667.2 388.3 L670.6 388.5 L674.1 388.8 L677.8 389.1 L681.5 389.4 L685.4 389.9 L689.4 390.3 L693.4 390.8 L697.6 391.4 L701.9 392.0 L706.3 392.6 L710.8 393.4 L715.3 394.1 L720.0 395.0" stroke="#000" stroke-width="1.9" fill="none"/><path d="M631.5 394.2 Q638.6 395.3 653.6 395.0 L720.0 395.0" stroke="#000" stroke-width="2" fill="none"/><path d="M642.1 394.0 L658.1 394.0" stroke="#000" stroke-width="0.6" fill="none" opacity="0.5"/><path d="M632.3 419.0 L632.7 417.6 L633.5 416.7 L634.6 415.9 L635.9 415.2 L637.5 414.5 L639.2 414.0 L641.1 413.5 L643.3 413.1 L645.5 412.7 L647.9 412.4 L650.5 412.2 L653.2 412.0 L656.1 411.9 L659.1 411.9 L662.2 411.9 L665.5 412.0 L668.8 412.1 L672.3 412.3 L676.0 412.6 L679.7 412.9 L683.5 413.3 L687.5 413.7 L691.6 414.2 L695.7 414.7 L700.0 415.2 L704.4 415.9 L708.9 416.5 L713.5 417.3 L718.2 418.1 L722.9 419.0" stroke="#000" stroke-width="1.9" fill="none"/><path d="M632.3 418.2 Q639.6 419.3 655.0 419.0 L722.9 419.0" stroke="#000" stroke-width="2" fill="none"/><path d="M643.2 418.0 L659.5 418.0" stroke="#000" stroke-width="0.6" fill="none" opacity="0.5"/><path d="M633.1 442.9 L633.5 441.5 L634.3 440.6 L635.5 439.8 L636.8 439.0 L638.4 438.4 L640.2 437.8 L642.2 437.3 L644.3 436.9 L646.6 436.5 L649.1 436.2 L651.8 436.0 L654.5 435.8 L657.5 435.7 L660.5 435.7 L663.7 435.7 L667.1 435.8 L670.5 435.9 L674.1 436.1 L677.8 436.4 L681.6 436.7 L685.5 437.1 L689.6 437.5 L693.8 438.0 L698.0 438.5 L702.4 439.1 L706.9 439.8 L711.5 440.4 L716.2 441.2 L721.0 442.0 L725.9 442.9" stroke="#000" stroke-width="1.9" fill="none"/><path d="M633.1 442.1 Q640.5 443.2 656.3 442.9 L725.9 442.9" stroke="#000" stroke-width="2" fill="none"/><path d="M644.3 441.9 L661.0 441.9" stroke="#000" stroke-width="0.6" fill="none" opacity="0.5"/><path d="M633.9 466.9 L634.3 465.5 L635.2 464.5 L636.3 463.6 L637.7 462.9 L639.3 462.3 L641.2 461.7 L643.2 461.2 L645.4 460.7 L647.8 460.3 L650.3 460.0 L653.0 459.8 L655.8 459.6 L658.8 459.5 L662.0 459.5 L665.2 459.5 L668.6 459.6 L672.2 459.7 L675.8 460.0 L679.6 460.2 L683.5 460.5 L687.6 460.9 L691.7 461.4 L696.0 461.9 L700.3 462.4 L704.8 463.0 L709.4 463.6 L714.1 464.4 L718.9 465.1 L723.8 466.0 L728.8 466.9" stroke="#000" stroke-width="1.9" fill="none"/><path d="M633.9 466.1 Q641.5 467.2 657.7 466.9 L728.8 466.9" stroke="#000" stroke-width="2" fill="none"/><path d="M645.3 465.9 L662.4 465.9" stroke="#000" stroke-width="0.6" fill="none" opacity="0.5"/><path d="M634.7 490.8 L635.2 489.4 L636.0 488.4 L637.2 487.5 L638.6 486.8 L640.3 486.1 L642.1 485.5 L644.2 485.0 L646.5 484.5 L648.9 484.2 L651.5 483.8 L654.2 483.6 L657.1 483.4 L660.2 483.3 L663.4 483.3 L666.7 483.3 L670.2 483.4 L673.8 483.5 L677.6 483.8 L681.5 484.0 L685.4 484.4 L689.6 484.8 L693.8 485.2 L698.2 485.7 L702.6 486.3 L707.2 486.9 L711.9 487.5 L716.7 488.3 L721.6 489.0 L726.6 489.9 L731.7 490.8" stroke="#000" stroke-width="1.9" fill="none"/><path d="M634.7 490.0 Q642.5 491.1 659.0 490.8 L731.7 490.8" stroke="#000" stroke-width="2" fill="none"/><path d="M646.4 489.8 L663.8 489.8" stroke="#000" stroke-width="0.6" fill="none" opacity="0.5"/><path d="M635.6 514.8 L636.0 513.3 L636.9 512.3 L638.0 511.4 L639.5 510.7 L641.2 510.0 L643.1 509.4 L645.2 508.8 L647.5 508.4 L650.0 508.0 L652.6 507.7 L655.5 507.4 L658.4 507.2 L661.6 507.1 L664.8 507.1 L668.3 507.1 L671.8 507.2 L675.5 507.3 L679.3 507.6 L683.3 507.8 L687.4 508.2 L691.6 508.6 L695.9 509.0 L700.3 509.5 L704.9 510.1 L709.6 510.7 L714.4 511.4 L719.3 512.2 L724.3 513.0 L729.4 513.8 L734.7 514.8" stroke="#000" stroke-width="1.9" fill="none"/><path d="M635.6 514.0 Q643.5 515.1 660.3 514.8 L734.7 514.8" stroke="#000" stroke-width="2" fill="none"/><path d="M647.5 513.8 L665.3 513.8" stroke="#000" stroke-width="0.6" fill="none" opacity="0.5"/><path d="M636.4 538.8 L636.8 537.3 L637.7 536.2 L638.9 535.3 L640.4 534.5 L642.1 533.8 L644.1 533.2 L646.2 532.7 L648.6 532.2 L651.1 531.8 L653.8 531.5 L656.7 531.2 L659.7 531.0 L662.9 530.9 L666.3 530.9 L669.8 530.9 L673.4 531.0 L677.2 531.1 L681.1 531.4 L685.1 531.7 L689.3 532.0 L693.6 532.4 L698.0 532.9 L702.5 533.4 L707.2 534.0 L712.0 534.6 L716.9 535.3 L721.9 536.1 L727.0 536.9 L732.3 537.8 L737.6 538.8" stroke="#000" stroke-width="1.9" fill="none"/><path d="M636.4 538.0 Q644.5 539.1 661.7 538.8 L737.6 538.8" stroke="#000" stroke-width="2" fill="none"/><path d="M648.5 537.8 L666.7 537.8" stroke="#000" stroke-width="0.6" fill="none" opacity="0.5"/><path d="M637.2 562.7 L637.6 561.2 L638.5 560.1 L639.8 559.2 L641.3 558.4 L643.1 557.7 L645.0 557.0 L647.3 556.5 L649.6 556.0 L652.2 555.6 L655.0 555.3 L657.9 555.0 L661.0 554.8 L664.3 554.7 L667.7 554.7 L671.3 554.7 L675.0 554.8 L678.8 554.9 L682.8 555.2 L686.9 555.5 L691.2 555.8 L695.6 556.2 L700.1 556.7 L704.7 557.2 L709.5 557.8 L714.4 558.5 L719.4 559.2 L724.5 560.0 L729.7 560.8 L735.1 561.7 L740.5 562.7" stroke="#000" stroke-width="1.9" fill="none"/><path d="M637.2 561.9 Q645.4 563.0 663.0 562.7 L740.5 562.7" stroke="#000" stroke-width="2" fill="none"/><path d="M649.6 561.7 L668.2 561.7" stroke="#000" stroke-width="0.6" fill="none" opacity="0.5"/><path d="M638.0 586.7 L638.4 585.1 L639.4 584.0 L640.6 583.1 L642.2 582.3 L644.0 581.5 L646.0 580.9 L648.3 580.3 L650.7 579.8 L653.4 579.4 L656.2 579.1 L659.2 578.8 L662.3 578.6 L665.7 578.5 L669.1 578.5 L672.8 578.5 L676.6 578.6 L680.5 578.7 L684.6 579.0 L688.8 579.3 L693.1 579.6 L697.6 580.1 L702.2 580.5 L706.9 581.1 L711.8 581.7 L716.8 582.4 L721.9 583.1 L727.1 583.9 L732.4 584.7 L737.9 585.7 L743.5 586.7" stroke="#000" stroke-width="1.9" fill="none"/><path d="M638.0 585.9 Q646.4 587.0 664.4 586.7 L743.5 586.7" stroke="#000" stroke-width="2" fill="none"/><path d="M650.6 585.7 L669.6 585.7" stroke="#000" stroke-width="0.6" fill="none" opacity="0.5"/><path d="M638.8 610.6 L639.3 609.0 L640.2 607.9 L641.5 607.0 L643.1 606.1 L644.9 605.4 L647.0 604.7 L649.3 604.2 L651.8 603.6 L654.5 603.2 L657.4 602.9 L660.4 602.6 L663.6 602.4 L667.0 602.3 L670.6 602.2 L674.3 602.3 L678.2 602.4 L682.2 602.5 L686.3 602.8 L690.6 603.1 L695.0 603.5 L699.6 603.9 L704.3 604.4 L709.1 604.9 L714.1 605.6 L719.2 606.2 L724.4 607.0 L729.7 607.8 L735.2 608.6 L740.7 609.6 L746.4 610.6" stroke="#000" stroke-width="1.9" fill="none"/><path d="M638.8 609.8 Q647.4 610.9 665.7 610.6 L746.4 610.6" stroke="#000" stroke-width="2" fill="none"/><path d="M651.7 609.6 L671.1 609.6" stroke="#000" stroke-width="0.6" fill="none" opacity="0.5"/><path d="M672.8 155.4 L690.7 155.9" stroke="#1a1a7a" stroke-width="2" fill="none"/><path d="M669.8 179.4 L693.6 179.4" stroke="#1a1a7a" stroke-width="2" fill="none"/><path d="M644.7 150 L673.8 614 M648.6 150 L677.2 614" stroke="#3282d2" stroke-width="1.1" fill="none"/><path d="M672.4 148 L730.4 614" stroke="#000" stroke-width="1.1" fill="none"/><path d="M669.3 179.4 L692.8 371.0" stroke="#1c1c9c" stroke-width="1" fill="none"/><path d="M671.3 179.4 L694.8 371.0" stroke="#1c1c9c" stroke-width="1" fill="none"/><path d="M673.3 179.4 L696.8 371.0" stroke="#1c1c9c" stroke-width="1" fill="none"/><path d="M675.3 179.4 L698.8 371.0" stroke="#1c1c9c" stroke-width="1" fill="none"/><rect x="684.4" y="269.2" width="7" height="5.5" stroke="#000" stroke-width="1.3" fill="none"/><rect x="687.4" y="293.2" width="7" height="5.5" stroke="#000" stroke-width="1.3" fill="none"/><rect x="690.4" y="317.1" width="7" height="5.5" stroke="#000" stroke-width="1.3" fill="none"/><rect x="693.4" y="341.1" width="7" height="5.5" stroke="#000" stroke-width="1.3" fill="none"/><rect x="696.4" y="365.0" width="7" height="5.5" stroke="#000" stroke-width="1.3" fill="none"/><rect x="699.4" y="389.0" width="7" height="5.5" stroke="#000" stroke-width="1.3" fill="none"/><rect x="702.4" y="413.0" width="7" height="5.5" stroke="#000" stroke-width="1.3" fill="none"/><rect x="705.4" y="436.9" width="7" height="5.5" stroke="#000" stroke-width="1.3" fill="none"/><rect x="708.4" y="460.9" width="7" height="5.5" stroke="#000" stroke-width="1.3" fill="none"/><rect x="711.4" y="484.8" width="7" height="5.5" stroke="#000" stroke-width="1.3" fill="none"/><rect x="714.4" y="508.8" width="7" height="5.5" stroke="#000" stroke-width="1.3" fill="none"/><rect x="717.4" y="532.8" width="7" height="5.5" stroke="#000" stroke-width="1.3" fill="none"/><rect x="720.4" y="556.7" width="7" height="5.5" stroke="#000" stroke-width="1.3" fill="none"/><rect x="723.4" y="580.7" width="7" height="5.5" stroke="#000" stroke-width="1.3" fill="none"/><rect x="726.5" y="604.6" width="7" height="5.5" stroke="#000" stroke-width="1.3" fill="none"/><rect x="659.0" y="316.6" width="8" height="7" rx="1" stroke="#c02828" stroke-width="1.6" fill="#fff"/><rect x="660.8" y="340.6" width="8" height="7" rx="1" stroke="#c02828" stroke-width="1.6" fill="#fff"/><rect x="662.5" y="364.5" width="8" height="7" rx="1" stroke="#c02828" stroke-width="1.6" fill="#fff"/><rect x="664.2" y="388.5" width="8" height="7" rx="1" stroke="#c02828" stroke-width="1.6" fill="#fff"/><rect x="666.0" y="412.5" width="8" height="7" rx="1" stroke="#c02828" stroke-width="1.6" fill="#fff"/><rect x="667.8" y="436.4" width="8" height="7" rx="1" stroke="#c02828" stroke-width="1.6" fill="#fff"/><rect x="669.5" y="460.4" width="8" height="7" rx="1" stroke="#c02828" stroke-width="1.6" fill="#fff"/><rect x="671.2" y="484.3" width="8" height="7" rx="1" stroke="#c02828" stroke-width="1.6" fill="#fff"/><rect x="673.0" y="508.3" width="8" height="7" rx="1" stroke="#c02828" stroke-width="1.6" fill="#fff"/><rect x="674.8" y="532.3" width="8" height="7" rx="1" stroke="#c02828" stroke-width="1.6" fill="#fff"/><rect x="676.5" y="556.2" width="8" height="7" rx="1" stroke="#c02828" stroke-width="1.6" fill="#fff"/><rect x="678.2" y="580.2" width="8" height="7" rx="1" stroke="#c02828" stroke-width="1.6" fill="#fff"/><rect x="680.0" y="604.1" width="8" height="7" rx="1" stroke="#c02828" stroke-width="1.6" fill="#fff"/><rect x="645.0" y="151.4" width="4" height="3" stroke="#333" stroke-width="0.6" fill="none"/><rect x="646.5" y="175.4" width="4" height="3" stroke="#333" stroke-width="0.6" fill="none"/><rect x="648.0" y="199.3" width="4" height="3" stroke="#333" stroke-width="0.6" fill="none"/><rect x="649.5" y="223.3" width="4" height="3" stroke="#333" stroke-width="0.6" fill="none"/><rect x="651.0" y="247.2" width="4" height="3" stroke="#333" stroke-width="0.6" fill="none"/><rect x="652.5" y="271.2" width="4" height="3" stroke="#333" stroke-width="0.6" fill="none"/><rect x="654.0" y="295.2" width="4" height="3" stroke="#333" stroke-width="0.6" fill="none"/><rect x="655.5" y="319.1" width="4" height="3" stroke="#333" stroke-width="0.6" fill="none"/><rect x="657.0" y="343.1" width="4" height="3" stroke="#333" stroke-width="0.6" fill="none"/><rect x="658.5" y="367.0" width="4" height="3" stroke="#333" stroke-width="0.6" fill="none"/><rect x="660.0" y="391.0" width="4" height="3" stroke="#333" stroke-width="0.6" fill="none"/><rect x="661.5" y="415.0" width="4" height="3" stroke="#333" stroke-width="0.6" fill="none"/><rect x="663.0" y="438.9" width="4" height="3" stroke="#333" stroke-width="0.6" fill="none"/><rect x="664.5" y="462.9" width="4" height="3" stroke="#333" stroke-width="0.6" fill="none"/><rect x="666.0" y="486.8" width="4" height="3" stroke="#333" stroke-width="0.6" fill="none"/><rect x="667.5" y="510.8" width="4" height="3" stroke="#333" stroke-width="0.6" fill="none"/><rect x="669.0" y="534.8" width="4" height="3" stroke="#333" stroke-width="0.6" fill="none"/><rect x="670.5" y="558.7" width="4" height="3" stroke="#333" stroke-width="0.6" fill="none"/><rect x="672.0" y="582.7" width="4" height="3" stroke="#333" stroke-width="0.6" fill="none"/><rect x="673.5" y="606.6" width="4" height="3" stroke="#333" stroke-width="0.6" fill="none"/><path d="M637.5 563 V612" stroke="#3a8a3a" stroke-width="1" fill="none"/><path d="M641 616 L648 610 M685 612 L690 618 M690 612 L685 618" stroke="#5050a0" stroke-width="1" fill="none"/><path d="M641 611 H660" stroke="#1c1c8c" stroke-width="1.5" fill="none"/></g><path d="M71 574 V589.5" stroke="#2e8b3e" stroke-width="1.8" fill="none"/><path d="M71 589 H87" stroke="#2a2ab8" stroke-width="1.3" fill="none"/><path d="M73.5 570.5 L78 575 L82.5 570.5 M78 575 V578.5" stroke="#2e8b3e" stroke-width="1.7" fill="none"/><path d="M73.5 585 H81.5 L74 593 H82" stroke="#a82828" stroke-width="1.8" fill="none"/><path d="M88.5 585.5 L96.5 593.5 M96.5 585.5 L88.5 593.5" stroke="#2a2ab0" stroke-width="1.8" fill="none"/></svg>
<div class="a" style="left:0;top:126px;width:26px;height:514px;background:linear-gradient(90deg,#fafafa,#ebebeb)"></div>
<div class="a" style="left:26px;top:126px;width:1px;height:514px;background:#d2d2d2"></div>
<div class="a" style="left:5px;top:131px;width:2px;height:2px;background:#b4b4b4"></div>
<div class="a" style="left:9px;top:131px;width:2px;height:2px;background:#b4b4b4"></div>
<div class="a" style="left:13px;top:131px;width:2px;height:2px;background:#b4b4b4"></div>
<div class="a" style="left:17px;top:131px;width:2px;height:2px;background:#b4b4b4"></div>
<div class="a" style="left:2px;top:136px;width:22px;height:22px;border:1px solid #7eb4ea;background:#dcecfc"></div>
<div class="a" style="left:0;top:628px;width:26px;height:12px;background:linear-gradient(90deg,#c4c4c4,#b4b4b4)"></div>
<div class="a" style="left:5px;top:631px;width:0;height:0;border-left:2px solid transparent;border-right:2px solid transparent;border-top:3px solid #000"></div><div class="a" style="left:5px;top:635px;width:0;height:0;border-left:2px solid transparent;border-right:2px solid transparent;border-top:3px solid #000"></div><div class="a" style="left:16px;top:632px;width:1.5px;height:5px;background:#000"></div><div class="a" style="left:19px;top:631px;width:0;height:0;border-top:3.5px solid transparent;border-bottom:3.5px solid transparent;border-left:4px solid #000"></div>
<div class="a" style="left:43px;top:617px;width:1284px;height:22px;background:#f0f0f0"></div>
<div class="a" style="left:43px;top:617px;width:1284px;height:1px;background:#c8c8c8"></div>
<div class="a" style="left:117px;top:619px;width:70px;height:18px;background:#dcdcdc;border:1px solid #c0c0c0;border-top:none;border-radius:0 0 3px 3px"></div>
<div class="a" style="left:51px;top:618px;width:66px;height:20px;background:#fafafa;border:1px solid #8a8a8a;border-top:none;border-radius:0 0 4px 4px;box-shadow:1px 1px 0 #444"></div>
<div class="t" style="left:73px;top:622px;font-size:12px;font-weight:700;color:#1a1a1a;letter-spacing:-0.2px">Model</div>
<div class="t" style="left:139px;top:622px;font-size:12px;color:#7a7a7a;letter-spacing:-0.5px">Paper 1</div>
<svg class="a" style="left:56px;top:620px" width="14" height="14"><circle cx="5" cy="6" r="3.5" fill="#ddd" stroke="#000"/><path d="M3 4h7v6H3z" fill="#999" stroke="#000"/><circle cx="9" cy="10" r="3.3" fill="#bbb" stroke="#000"/></svg>
<svg class="a" style="left:123px;top:620px" width="12" height="15"><path d="M1 1H7L10 4V13H1Z" fill="#fff" stroke="#000" stroke-width="1.3"/><text x="3.5" y="11" font-family="Liberation Sans" font-size="7" font-weight="700">1</text></svg>
<div class="a" style="left:213px;top:620px;width:1px;height:18px;background:#555"></div>
<div class="a" style="left:216px;top:620px;width:1127px;height:18px;background:linear-gradient(#e9e9e9,#f2f2f2)"></div>
<div class="a" style="left:220px;top:625px;width:0;height:0;border-top:4px solid transparent;border-bottom:4px solid transparent;border-right:4px solid #404040"></div>
<div class="a" style="left:1312px;top:625px;width:0;height:0;border-top:4px solid transparent;border-bottom:4px solid transparent;border-left:4px solid #404040"></div>
<div class="a" style="left:688px;top:621px;width:175px;height:16px;border:1px solid #9a9a9a;border-radius:2px;background:linear-gradient(#f4f4f4,#d8d8d8 60%,#d0d0d0)"></div>
<div class="a" style="left:771px;top:625px;width:1px;height:7px;background:#555"></div>
<div class="a" style="left:774px;top:625px;width:1px;height:7px;background:#555"></div>
<div class="a" style="left:777px;top:625px;width:1px;height:7px;background:#555"></div>
<div class="a" style="left:0;top:639px;width:1367px;height:42px;background:#f0f0f0"></div>
<div class="a" style="left:0;top:680px;width:1367px;height:1px;background:#a0a0a0"></div>
<div class="a" style="left:0;top:681px;width:1367px;height:1px;background:#fff"></div>
<svg class="a" style="left:9px;top:650px" width="12" height="12"><path d="M1.5 1.5L10.5 10.5M10.5 1.5L1.5 10.5" stroke="#8a8a8a" stroke-width="2.6"/></svg>
<svg class="a" style="left:34px;top:649px" width="15" height="14"><rect x="0.5" y="0.5" width="14" height="13" fill="#f6f6f6" stroke="#9a9a9a"/><rect x="0.5" y="0.5" width="14" height="3" fill="#bdbdbd"/><path d="M0.5 6.5H14.5M0.5 9H14.5M0.5 11.5H14.5M4 3.5V13.5M7.5 3.5V13.5M11 3.5V13.5" stroke="#a8a8a8" stroke-width="0.8"/></svg>
<div class="a" style="left:56px;top:644px;width:1px;height:34px;background:#c6c6c6"></div>
<div class="a" style="left:57px;top:644px;width:1px;height:34px;background:#fff"></div>
<div class="t" style="left:63px;top:645px;font-size:12px;color:#222;letter-spacing:-0.1px">Scale X</div>
<div class="a" style="left:62px;top:659px;width:76px;height:15px;border-top:1px solid #a8a8a8;border-left:1px solid #a8a8a8;border-right:1px solid #e4e4e4;background:#f0f0f0"></div>
<div class="t" style="left:65px;top:662px;font-size:12px;color:#8a8a8a">1</div>
<div class="a" style="left:126px;top:660px;width:11px;height:14px;border:1px solid #c8c8c8;background:#f4f4f4"></div>
<div class="a" style="left:129px;top:662px;width:0;height:0;border-left:3px solid transparent;border-right:3px solid transparent;border-bottom:3px solid #9a9a9a"></div>
<div class="a" style="left:129px;top:669px;width:0;height:0;border-left:3px solid transparent;border-right:3px solid transparent;border-top:3px solid #9a9a9a"></div>
<div class="t" style="left:144px;top:645px;font-size:12px;color:#222;letter-spacing:-0.1px">Scale Y</div>
<div class="a" style="left:143px;top:659px;width:76px;height:15px;border-top:1px solid #a8a8a8;border-left:1px solid #a8a8a8;border-right:1px solid #e4e4e4;background:#f0f0f0"></div>
<div class="t" style="left:146px;top:662px;font-size:12px;color:#8a8a8a">1</div>
<div class="a" style="left:207px;top:660px;width:11px;height:14px;border:1px solid #c8c8c8;background:#f4f4f4"></div>
<div class="a" style="left:210px;top:662px;width:0;height:0;border-left:3px solid transparent;border-right:3px solid transparent;border-bottom:3px solid #9a9a9a"></div>
<div class="a" style="left:210px;top:669px;width:0;height:0;border-left:3px solid transparent;border-right:3px solid transparent;border-top:3px solid #9a9a9a"></div>
<div class="t" style="left:225px;top:645px;font-size:12px;color:#222;letter-spacing:-0.1px">Scale Z</div>
<div class="a" style="left:224px;top:659px;width:76px;height:15px;border-top:1px solid #a8a8a8;border-left:1px solid #a8a8a8;border-right:1px solid #e4e4e4;background:#f0f0f0"></div>
<div class="t" style="left:227px;top:662px;font-size:12px;color:#8a8a8a">1</div>
<div class="a" style="left:288px;top:660px;width:11px;height:14px;border:1px solid #c8c8c8;background:#f4f4f4"></div>
<div class="a" style="left:291px;top:662px;width:0;height:0;border-left:3px solid transparent;border-right:3px solid transparent;border-bottom:3px solid #9a9a9a"></div>
<div class="a" style="left:291px;top:669px;width:0;height:0;border-left:3px solid transparent;border-right:3px solid transparent;border-top:3px solid #9a9a9a"></div>
<div class="t" style="left:306px;top:645px;font-size:12px;color:#222;letter-spacing:-0.1px">Pos X</div>
<div class="a" style="left:305px;top:659px;width:76px;height:15px;border-top:1px solid #a8a8a8;border-left:1px solid #a8a8a8;border-right:1px solid #e4e4e4;background:#f0f0f0"></div>
<div class="t" style="left:308px;top:662px;font-size:12px;color:#8a8a8a">0 mm</div>
<div class="t" style="left:387px;top:645px;font-size:12px;color:#222;letter-spacing:-0.1px">Pos Y</div>
<div class="a" style="left:386px;top:659px;width:76px;height:15px;border-top:1px solid #a8a8a8;border-left:1px solid #a8a8a8;border-right:1px solid #e4e4e4;background:#f0f0f0"></div>
<div class="t" style="left:389px;top:662px;font-size:12px;color:#8a8a8a">0 mm</div>
<div class="t" style="left:468px;top:645px;font-size:12px;color:#222;letter-spacing:-0.1px">Pos Z</div>
<div class="a" style="left:467px;top:659px;width:76px;height:15px;border-top:1px solid #a8a8a8;border-left:1px solid #a8a8a8;border-right:1px solid #e4e4e4;background:#f0f0f0"></div>
<div class="t" style="left:470px;top:662px;font-size:12px;color:#8a8a8a">0 mm</div>
<div class="t" style="left:549px;top:645px;font-size:12px;color:#222;letter-spacing:-0.1px">Delta X</div>
<div class="a" style="left:548px;top:659px;width:76px;height:15px;border-top:1px solid #a8a8a8;border-left:1px solid #a8a8a8;border-right:1px solid #e4e4e4;background:#f0f0f0"></div>
<div class="t" style="left:551px;top:662px;font-size:12px;color:#8a8a8a">0 mm</div>
<div class="t" style="left:630px;top:645px;font-size:12px;color:#222;letter-spacing:-0.1px">Delta Y</div>
<div class="a" style="left:629px;top:659px;width:76px;height:15px;border-top:1px solid #a8a8a8;border-left:1px solid #a8a8a8;border-right:1px solid #e4e4e4;background:#f0f0f0"></div>
<div class="t" style="left:632px;top:662px;font-size:12px;color:#8a8a8a">0 mm</div>
<div class="t" style="left:711px;top:645px;font-size:12px;color:#222;letter-spacing:-0.1px">Delta Z</div>
<div class="a" style="left:710px;top:659px;width:76px;height:15px;border-top:1px solid #a8a8a8;border-left:1px solid #a8a8a8;border-right:1px solid #e4e4e4;background:#f0f0f0"></div>
<div class="t" style="left:713px;top:662px;font-size:12px;color:#8a8a8a">0 mm</div>
<div class="t" style="left:792px;top:645px;font-size:12px;color:#222;letter-spacing:-0.1px">Rot X</div>
<div class="a" style="left:791px;top:659px;width:76px;height:15px;border-top:1px solid #a8a8a8;border-left:1px solid #a8a8a8;border-right:1px solid #e4e4e4;background:#f0f0f0"></div>
<div class="t" style="left:794px;top:662px;font-size:12px;color:#8a8a8a">0</div>
<div class="a" style="left:855px;top:660px;width:11px;height:14px;border:1px solid #c8c8c8;background:#f4f4f4"></div>
<div class="a" style="left:858px;top:662px;width:0;height:0;border-left:3px solid transparent;border-right:3px solid transparent;border-bottom:3px solid #9a9a9a"></div>
<div class="a" style="left:858px;top:669px;width:0;height:0;border-left:3px solid transparent;border-right:3px solid transparent;border-top:3px solid #9a9a9a"></div>
<div class="t" style="left:873px;top:645px;font-size:12px;color:#222;letter-spacing:-0.1px">Rot Y</div>
<div class="a" style="left:872px;top:659px;width:76px;height:15px;border-top:1px solid #a8a8a8;border-left:1px solid #a8a8a8;border-right:1px solid #e4e4e4;background:#f0f0f0"></div>
<div class="t" style="left:875px;top:662px;font-size:12px;color:#8a8a8a">0</div>
<div class="a" style="left:936px;top:660px;width:11px;height:14px;border:1px solid #c8c8c8;background:#f4f4f4"></div>
<div class="a" style="left:939px;top:662px;width:0;height:0;border-left:3px solid transparent;border-right:3px solid transparent;border-bottom:3px solid #9a9a9a"></div>
<div class="a" style="left:939px;top:669px;width:0;height:0;border-left:3px solid transparent;border-right:3px solid transparent;border-top:3px solid #9a9a9a"></div>
<div class="t" style="left:954px;top:645px;font-size:12px;color:#222;letter-spacing:-0.1px">Rot Z</div>
<div class="a" style="left:953px;top:659px;width:76px;height:15px;border-top:1px solid #a8a8a8;border-left:1px solid #a8a8a8;border-right:1px solid #e4e4e4;background:#f0f0f0"></div>
<div class="t" style="left:956px;top:662px;font-size:12px;color:#8a8a8a">0</div>
<div class="a" style="left:1017px;top:660px;width:11px;height:14px;border:1px solid #c8c8c8;background:#f4f4f4"></div>
<div class="a" style="left:1020px;top:662px;width:0;height:0;border-left:3px solid transparent;border-right:3px solid transparent;border-bottom:3px solid #9a9a9a"></div>
<div class="a" style="left:1020px;top:669px;width:0;height:0;border-left:3px solid transparent;border-right:3px solid transparent;border-top:3px solid #9a9a9a"></div>
<div class="a" style="left:1036px;top:644px;width:1px;height:34px;background:#c6c6c6"></div>
<div class="a" style="left:1037px;top:644px;width:1px;height:34px;background:#fff"></div>
<div class="a" style="left:0;top:682px;width:1367px;height:26px;background:#f0f0f0"></div>
<div class="t" style="left:10px;top:690px;font-size:12px;color:#111;letter-spacing:-0.2px">Select object(s)</div>
<div class="t" style="left:887px;top:690px;font-size:12px;color:#111;letter-spacing:-0.3px">SNAP</div>
<div class="t" style="left:925px;top:690px;font-size:12px;color:#8a8a8a;letter-spacing:-0.4px">GEO</div>
<div class="a" style="left:920px;top:684px;width:1px;height:22px;background:#d0d0d0"></div>
<div class="a" style="left:951px;top:684px;width:1px;height:22px;background:#d0d0d0"></div>
<div class="a" style="left:1248px;top:684px;width:1px;height:22px;background:#d0d0d0"></div>
<div class="a" style="left:1305px;top:684px;width:1px;height:22px;background:#d0d0d0"></div>
<div class="a" style="left:978px;top:687px;width:73px;height:19px;border:1px solid #555;background:#fff"></div>
<div class="t" style="left:980px;top:690px;font-size:12px;color:#000;letter-spacing:-0.3px">606,96 mm</div>
<div class="a" style="left:968px;top:686px;width:8px;height:7px;border:1.5px solid #222"></div>
<div class="t" style="left:968px;top:694px;font-size:10px;color:#222">X</div>
<div class="a" style="left:1074px;top:687px;width:73px;height:19px;border:1px solid #555;background:#fff"></div>
<div class="t" style="left:1076px;top:690px;font-size:12px;color:#000;letter-spacing:-0.3px">263,15 mm</div>
<div class="a" style="left:1064px;top:686px;width:8px;height:7px;border:1.5px solid #222"></div>
<div class="t" style="left:1064px;top:694px;font-size:10px;color:#222">Y</div>
<div class="a" style="left:1170px;top:687px;width:73px;height:19px;border:1px solid #555;background:#fff"></div>
<div class="t" style="left:1172px;top:690px;font-size:12px;color:#9a9a9a;letter-spacing:-0.3px">0 mm</div>
<div class="a" style="left:1160px;top:686px;width:8px;height:7px;border:1.5px solid #222"></div>
<div class="t" style="left:1160px;top:694px;font-size:10px;color:#222">Z</div>
<div class="t" style="left:1254px;top:690px;font-size:12px;color:#111">13%</div>
<div class="t" style="left:1310px;top:690px;font-size:12px;color:#111;letter-spacing:-0.2px">20:44</div>
<div class="a" style="left:1344px;top:120px;width:23px;height:520px;background:#f7f7f7"></div>
<div class="a" style="left:1346px;top:128px;width:21px;height:22px;background:#f6f6f6;border:1px solid #c4c4c4"></div>
<div class="a" style="left:1346px;top:150px;width:21px;height:116px;background:linear-gradient(90deg,#dde9f7,#eef4fb);border-left:1px solid #b0b8c8"></div>
<div class="t" style="top:176px;font-size:12px;color:#222;transform:rotate(90deg);transform-origin:0 0;left:1363px">Tools</div>
<div class="a" style="left:1346px;top:267px;width:21px;height:24px;background:#f6f6f6;border:1px solid #c8c8c8;border-right:none"></div>
<div class="a" style="left:1346px;top:291px;width:21px;height:24px;background:#f6f6f6;border:1px solid #c8c8c8;border-right:none"></div>
<div class="a" style="left:1346px;top:316px;width:21px;height:24px;background:#f6f6f6;border:1px solid #c8c8c8;border-right:none"></div>
<div class="a" style="left:1346px;top:340px;width:21px;height:24px;background:#f6f6f6;border:1px solid #c8c8c8;border-right:none"></div>
<svg class="ic" style="left:14px;top:51px" width="16" height="16" viewBox="0 0 16 16"><path d="M3.5 1.5H10L13.5 5V14.5H3.5Z" fill="#fff" stroke="#000" stroke-width="1.4"/><path d="M10 1.5V5H13.5" fill="none" stroke="#000" stroke-width="1" /></svg>
<svg class="ic" style="left:35px;top:51px" width="16" height="16" viewBox="0 0 16 16"><path d="M1.5 5.5H6L7 7H12V8.5H4.5L1.5 14Z" fill="#f0f090" stroke="#000" stroke-width="1"/><path d="M1.5 14L4.5 8.5H15.5L12.5 14Z" fill="#8a8a20" stroke="#000" stroke-width="1"/><path d="M8 4Q10.5 0.5 13 3.5" fill="none" stroke="#000" stroke-width="1" /><path d="M12 2.5L13.5 4L14.5 2" fill="none" stroke="#000" stroke-width="1" /></svg>
<svg class="ic" style="left:58px;top:51px" width="16" height="16" viewBox="0 0 16 16"><rect x="1.5" y="1.5" width="13" height="13" fill="#6e6e28" stroke="#000" stroke-width="1.4"/><rect x="4" y="2" width="8" height="6" fill="#c8c8c8" stroke="none" stroke-width="0"/><rect x="4" y="10" width="8" height="4" fill="#111" stroke="none" stroke-width="0"/><rect x="9" y="11" width="2" height="3" fill="#ddd" stroke="none" stroke-width="0"/></svg>
<svg class="ic" style="left:85px;top:51px" width="16" height="16" viewBox="0 0 16 16"><path d="M4.5 1.5H11.5L12.5 5H3.5Z" fill="#fff" stroke="#000" stroke-width="1"/><path d="M1.5 6H14.5V11.5H1.5Z" fill="#d0d0d0" stroke="#000" stroke-width="1.4"/><rect x="2.5" y="8" width="11" height="2" fill="#b8b890" stroke="none" stroke-width="0"/><path d="M2.5 11.5H13.5V14.5H2.5Z" fill="#e8e8e8" stroke="#000" stroke-width="1.2"/></svg>
<svg class="ic" style="left:106px;top:51px" width="16" height="16" viewBox="0 0 16 16"><path d="M2.5 1.5H9L12 4.5V14.5H2.5Z" fill="#fff" stroke="#000" stroke-width="1.4"/><circle cx="10" cy="10" r="3.3" fill="#8ab0c0" stroke="#000" stroke-width="1.3"/><path d="M12.3 12.3L15 15" fill="none" stroke="#000" stroke-width="1.8" /></svg>
<svg class="ic" style="left:135px;top:51px" width="16" height="16" viewBox="0 0 16 16"><path d="M5 2L10 11M11 2L6 11" fill="none" stroke="#a8a8a8" stroke-width="1.1" /><circle cx="5.5" cy="13" r="2" fill="none" stroke="#a8a8a8" stroke-width="1.1"/><circle cx="10.5" cy="13" r="2" fill="none" stroke="#a8a8a8" stroke-width="1.1"/></svg>
<svg class="ic" style="left:158px;top:51px" width="16" height="16" viewBox="0 0 16 16"><path d="M1.5 2.5H7L8.5 4V11.5H1.5Z" fill="#eee" stroke="#a8a8a8" stroke-width="1"/><path d="M6.5 5.5H12L14.5 8V14.5H6.5Z" fill="#eee" stroke="#a8a8a8" stroke-width="1"/><path d="M8 9H13M8 11H13M8 13H13M3 6H7M3 8H6" fill="none" stroke="#b0b0b0" stroke-width="0.8" /></svg>
<svg class="ic" style="left:179px;top:51px" width="16" height="16" viewBox="0 0 16 16"><rect x="1.5" y="3.5" width="11" height="11" fill="#7a7a50" stroke="#000" stroke-width="1.3"/><path d="M5 3.5V1.5H9V3.5Z" fill="#d8d870" stroke="#000" stroke-width="1"/><rect x="6.5" y="8.5" width="8.5" height="6.5" fill="#fff" stroke="#1a1a80" stroke-width="1.4"/><path d="M8.5 11.5H13" fill="none" stroke="#1a1a80" stroke-width="1.2" /></svg>
<svg class="ic" style="left:201px;top:51px" width="16" height="16" viewBox="0 0 16 16"><path d="M2 10L8 5L12 9L6 14Z" fill="#e8e870" stroke="#000" stroke-width="1.2"/><path d="M4 10.5L9 7M5 12L10 8.5" fill="none" stroke="#8a8a30" stroke-width="0.8" /><path d="M9 5.5L13 1.5L15 3.5L11 7.5Z" fill="#1a1a60" stroke="#000" stroke-width="0.8"/></svg>
<svg class="ic" style="left:230px;top:51px" width="16" height="16" viewBox="0 0 16 16"><path d="M4 7Q8 3 12 6Q13.5 9 11 12" fill="none" stroke="#a8a8a8" stroke-width="2" /><path d="M2 4V9.5H7.5Z" fill="#a8a8a8" stroke="#a8a8a8" stroke-width="0.5"/></svg>
<svg class="ic" style="left:252px;top:51px" width="16" height="16" viewBox="0 0 16 16"><path d="M12 7Q8 3 4 6Q2.5 9 5 12" fill="none" stroke="#a8a8a8" stroke-width="2" /><path d="M14 4V9.5H8.5Z" fill="#a8a8a8" stroke="#a8a8a8" stroke-width="0.5"/></svg>
<svg class="ic" style="left:279px;top:51px" width="16" height="16" viewBox="0 0 16 16"><circle cx="9.5" cy="6.5" r="5.3" fill="none" stroke="#000" stroke-width="1.3" stroke-dasharray="3 1"/><path d="M7 6.5H12M9.5 4V9" fill="none" stroke="#000" stroke-width="1.3" /><path d="M5.5 10.5L2.5 13.5" fill="none" stroke="#000" stroke-width="2.6" /><path d="M3 13L2 14" fill="none" stroke="#888" stroke-width="1.5" /></svg>
<svg class="ic" style="left:301px;top:51px" width="16" height="16" viewBox="0 0 16 16"><circle cx="9.5" cy="6.5" r="5.3" fill="none" stroke="#000" stroke-width="1.3" stroke-dasharray="3 1"/><path d="M7 6.5H12" fill="none" stroke="#000" stroke-width="1.3" /><path d="M5.5 10.5L2.5 13.5" fill="none" stroke="#000" stroke-width="2.6" /><path d="M3 13L2 14" fill="none" stroke="#888" stroke-width="1.5" /></svg>
<svg class="ic" style="left:323px;top:51px" width="16" height="16" viewBox="0 0 16 16"><rect x="1.5" y="1.5" width="10" height="11" fill="none" stroke="#000" stroke-width="1" stroke-dasharray="1 1"/><circle cx="10" cy="12" r="3.6" fill="none" stroke="#000" stroke-width="1.2" stroke-dasharray="2 1"/><path d="M8.5 12.5H12.5M10.5 10.5V14.5" fill="none" stroke="#000" stroke-width="1.2" /></svg>
<svg class="ic" style="left:345px;top:51px" width="16" height="16" viewBox="0 0 16 16"><rect x="1.5" y="2.5" width="13" height="11" fill="#fff" stroke="#000" stroke-width="1.6"/><path d="M3.5 6H12.5" fill="none" stroke="#000" stroke-width="1" /><path d="M3 6L6 3.5V8.5Z" fill="#000" stroke="#000" stroke-width="0.5"/><path d="M13 6L10 3.5V8.5Z" fill="#000" stroke="#000" stroke-width="0.5"/></svg>
<svg class="ic" style="left:367px;top:51px" width="16" height="16" viewBox="0 0 16 16"><rect x="1.5" y="1.5" width="13" height="13" fill="#b8b8b8" stroke="#b0b0b0" stroke-width="1"/><rect x="5.5" y="3.5" width="5" height="9" fill="#e0e0e0" stroke="#999" stroke-width="1"/><path d="M6.5 6H9.5M6.5 8H9.5M6.5 10H9.5" fill="none" stroke="#999" stroke-width="0.8" /></svg>
<svg class="ic" style="left:390px;top:51px" width="16" height="16" viewBox="0 0 16 16"><circle cx="9.5" cy="6.5" r="5.3" fill="none" stroke="#b0b0b0" stroke-width="1.2"/><rect x="7" y="4" width="5" height="5" fill="none" stroke="#b0b0b0" stroke-width="1"/><path d="M5.5 10.5L2 14" fill="none" stroke="#b0b0b0" stroke-width="2.5" /></svg>
<svg class="ic" style="left:416px;top:51px" width="16" height="16" viewBox="0 0 16 16"><rect x="1.5" y="1.5" width="13" height="13" fill="#f4f4f4" stroke="#b0b0b0" stroke-width="1.2"/><circle cx="8" cy="4.5" r="1.5" fill="#aaa" stroke="#aaa" stroke-width="1"/><path d="M4 12L6 8L8 12Z" fill="#bbb" stroke="#aaa" stroke-width="0.6"/><rect x="9" y="9" width="5" height="5" fill="#eee" stroke="#aaa" stroke-width="1"/><path d="M13 18L18 13V18Z" fill="#f2f27a"/><path d="M12.5 18.2H18.2V12.5" fill="none" stroke="#000" stroke-width="1.3"/></svg>
<svg class="ic" style="left:438px;top:51px" width="16" height="16" viewBox="0 0 16 16"><path d="M1 7.5H6L7 9H11V10H4L1 15Z" fill="#f0f070" stroke="#000" stroke-width="1"/><path d="M1 15L4 10H13L10 15Z" fill="#e8e860" stroke="#000" stroke-width="1"/><rect x="6.5" y="0.5" width="9" height="7.5" fill="#30d8e8" stroke="#000" stroke-width="1.2"/><circle cx="11" cy="3" r="1.3" fill="#ff0" stroke="#333" stroke-width="0.6"/><path d="M13 18L18 13V18Z" fill="#f2f27a"/><path d="M12.5 18.2H18.2V12.5" fill="none" stroke="#000" stroke-width="1.3"/></svg>
<svg class="ic" style="left:462px;top:51px" width="16" height="16" viewBox="0 0 16 16"><path d="M1 4L9 14" fill="none" stroke="#2a8a2a" stroke-width="0.9" /><path d="M6 8L12 2L14 4L8 10Z" fill="#fff" stroke="#000" stroke-width="1.4"/></svg>
<svg class="ic" style="left:490px;top:51px" width="16" height="16" viewBox="0 0 16 16"><text x="1" y="6.5" font-family="Liberation Sans" font-size="6.5" font-weight="700" fill="#000">ABC</text><path d="M3 9L6 13L14 4" fill="none" stroke="#1a1a60" stroke-width="2.2" /><path d="M13 18L18 13V18Z" fill="#f2f27a"/><path d="M12.5 18.2H18.2V12.5" fill="none" stroke="#000" stroke-width="1.3"/></svg>
<svg class="ic" style="left:518px;top:51px" width="16" height="16" viewBox="0 0 16 16"><path d="M1 2L5 6M5 2L1 6" fill="none" stroke="#888" stroke-width="0.8" /><rect x="3" y="9" width="1" height="1" fill="#2a2a60"/><rect x="3" y="12" width="1" height="1" fill="#2a2a60"/><rect x="3" y="15" width="1" height="1" fill="#2a2a60"/><rect x="6" y="6" width="1" height="1" fill="#2a2a60"/><rect x="6" y="9" width="1" height="1" fill="#2a2a60"/><rect x="6" y="12" width="1" height="1" fill="#2a2a60"/><rect x="6" y="15" width="1" height="1" fill="#2a2a60"/><rect x="9" y="6" width="1" height="1" fill="#2a2a60"/><rect x="9" y="9" width="1" height="1" fill="#2a2a60"/><rect x="9" y="12" width="1" height="1" fill="#2a2a60"/><rect x="9" y="15" width="1" height="1" fill="#2a2a60"/><rect x="12" y="6" width="1" height="1" fill="#2a2a60"/><rect x="12" y="9" width="1" height="1" fill="#2a2a60"/><rect x="12" y="12" width="1" height="1" fill="#2a2a60"/><rect x="12" y="15" width="1" height="1" fill="#2a2a60"/><path d="M13 18L18 13V18Z" fill="#f2f27a"/><path d="M12.5 18.2H18.2V12.5" fill="none" stroke="#000" stroke-width="1.3"/></svg>
<svg class="ic" style="left:539px;top:51px" width="16" height="16" viewBox="0 0 16 16"><path d="M4 2V15M2 13.5H15" fill="none" stroke="#000" stroke-width="1.4" /><rect x="11" y="2" width="3" height="3" fill="none" stroke="#d02020" stroke-width="1.3"/><path d="M13 18L18 13V18Z" fill="#f2f27a"/><path d="M12.5 18.2H18.2V12.5" fill="none" stroke="#000" stroke-width="1.3"/></svg>
<svg class="ic" style="left:561px;top:51px" width="16" height="16" viewBox="0 0 16 16"><path d="M2 11L8 5" fill="none" stroke="#000" stroke-width="1" /><path d="M8 5L14 13" fill="none" stroke="#a06060" stroke-width="0.9" /><rect x="7" y="3.5" width="3" height="3" fill="none" stroke="#d02020" stroke-width="1.3"/><path d="M11 2H13V4H11Z" fill="none" stroke="#000" stroke-width="0.7" /><path d="M13 18L18 13V18Z" fill="#f2f27a"/><path d="M12.5 18.2H18.2V12.5" fill="none" stroke="#000" stroke-width="1.3"/></svg>
<svg class="ic" style="left:583px;top:51px" width="16" height="16" viewBox="0 0 16 16"><path d="M2 8L8 5L12 9V14L6 15L2 12Z" fill="#e01010" stroke="#000" stroke-width="1"/><path d="M3 4L7 1M7 2L12 6L14 10" fill="none" stroke="#000" stroke-width="1.3" /><path d="M9 4L13 4L14 8L10 9Z" fill="#fff" stroke="#000" stroke-width="0.9"/><path d="M13 18L18 13V18Z" fill="#f2f27a"/><path d="M12.5 18.2H18.2V12.5" fill="none" stroke="#000" stroke-width="1.3"/></svg>
<svg class="ic" style="left:612px;top:51px" width="16" height="16" viewBox="0 0 16 16"><path d="M1 8.5H5L6 10H9V11H3.5L1 15Z" fill="#f0f090" stroke="#000" stroke-width="1"/><path d="M1 15L3.5 11H12.5L10 15Z" fill="#8a8a20" stroke="#000" stroke-width="1"/><rect x="7" y="1" width="8" height="6.5" fill="#fff" stroke="#1a1a80" stroke-width="1.3"/><rect x="7" y="1" width="8" height="2" fill="#1a1a80" stroke="none" stroke-width="0"/><path d="M2 6Q2 2 5 2.5" fill="none" stroke="#000" stroke-width="1" /><path d="M13 18L18 13V18Z" fill="#f2f27a"/><path d="M12.5 18.2H18.2V12.5" fill="none" stroke="#000" stroke-width="1.3"/></svg>
<svg class="ic" style="left:633px;top:51px" width="16" height="16" viewBox="0 0 16 16"><path d="M1.5 5.5L5 2H14.5V11L11 14.5H1.5Z" fill="#fff" stroke="#000" stroke-width="1.4"/><path d="M1.5 5.5L5 2H14.5L11 5.5Z" fill="#40e0e8" stroke="#000" stroke-width="1"/><path d="M11 5.5V14.5M11 5.5H1.5" fill="none" stroke="#000" stroke-width="1.2" /><path d="M5 2V11H14.5M5 11L1.5 14.5" fill="none" stroke="#888" stroke-width="0.6" /><path d="M13 18L18 13V18Z" fill="#f2f27a"/><path d="M12.5 18.2H18.2V12.5" fill="none" stroke="#000" stroke-width="1.3"/></svg>
<svg class="ic" style="left:654px;top:51px" width="16" height="16" viewBox="0 0 16 16"><circle cx="8" cy="8" r="2.5" fill="#aaa" stroke="#666" stroke-width="0.8"/><path d="M8 1V5M8 11V15M1 8H5M11 8H15" fill="none" stroke="#2030c0" stroke-width="1.3" /><path d="M5.5 3L8 1L10.5 3M5.5 13L8 15L10.5 13M3 5.5L1 8L3 10.5M13 5.5L15 8L13 10.5" fill="none" stroke="#2030c0" stroke-width="1.1" /><path d="M13 18L18 13V18Z" fill="#f2f27a"/><path d="M12.5 18.2H18.2V12.5" fill="none" stroke="#000" stroke-width="1.3"/></svg>
<svg class="ic" style="left:677px;top:51px" width="16" height="16" viewBox="0 0 16 16"><path d="M3 2Q-0.5 8 3 14" fill="none" stroke="#2030c0" stroke-width="1" stroke-dasharray="1.5 1"/><rect x="5" y="6" width="10" height="6" fill="#3a3a3a" stroke="#000" stroke-width="1"/><rect x="7" y="4.5" width="4" height="2" fill="#3a3a3a" stroke="none" stroke-width="0"/><circle cx="10" cy="9" r="1.5" fill="#aaa" stroke="none" stroke-width="0"/><path d="M13 18L18 13V18Z" fill="#f2f27a"/><path d="M12.5 18.2H18.2V12.5" fill="none" stroke="#000" stroke-width="1.3"/></svg>
<svg class="ic" style="left:698px;top:51px" width="16" height="16" viewBox="0 0 16 16"><ellipse cx="8" cy="11.8" rx="7.2" ry="2.2" fill="#fff" stroke="#000" stroke-width="1.3"/><path d="M2.5 2.5H11.5V7Q11.5 11 7 11Q2.5 11 2.5 7Z" fill="#fff" stroke="#000" stroke-width="1.3"/><path d="M2.8 5H11.2" fill="none" stroke="#000" stroke-width="1" /><path d="M11.5 3.5Q15 3 14.5 6Q14 8 11 8.5" fill="none" stroke="#000" stroke-width="1.2" /><path d="M13 18L18 13V18Z" fill="#f2f27a"/><path d="M12.5 18.2H18.2V12.5" fill="none" stroke="#000" stroke-width="1.3"/></svg>
<svg class="ic" style="left:728px;top:51px" width="16" height="16" viewBox="0 0 16 16"><path d="M1 9L7 5H15L9 9Z" fill="#30c030" stroke="#000" stroke-width="1"/><path d="M1 11H9L15 7M1 13H9L15 9" fill="none" stroke="#000" stroke-width="1.3" /><rect x="1" y="9" width="8" height="5" fill="#80e080" stroke="none" stroke-width="0"/><path d="M7 3Q10 0 14 2" fill="none" stroke="#000" stroke-width="1" /><path d="M13 1V4" fill="none" stroke="#000" stroke-width="1" /><path d="M13 18L18 13V18Z" fill="#f2f27a"/><path d="M12.5 18.2H18.2V12.5" fill="none" stroke="#000" stroke-width="1.3"/></svg>
<svg class="ic" style="left:750px;top:51px" width="16" height="16" viewBox="0 0 16 16"><path d="M3 8L8 3L12 7M5 8L9 4" fill="none" stroke="#000" stroke-width="1.1" /><rect x="1.5" y="9.5" width="12" height="5" fill="#fff" stroke="#000" stroke-width="1.3"/><rect x="3" y="11" width="2" height="2" fill="#888" stroke="none" stroke-width="0"/><rect x="6.5" y="11" width="2" height="2" fill="#888" stroke="none" stroke-width="0"/><rect x="10" y="11" width="2" height="2" fill="#888" stroke="none" stroke-width="0"/><path d="M8 3Q10 0 14 2" fill="none" stroke="#000" stroke-width="1" /><path d="M13 18L18 13V18Z" fill="#f2f27a"/><path d="M12.5 18.2H18.2V12.5" fill="none" stroke="#000" stroke-width="1.3"/></svg>
<svg class="ic" style="left:770px;top:51px" width="16" height="16" viewBox="0 0 16 16"><rect x="2" y="2" width="3" height="12" fill="#e8e840" stroke="none" stroke-width="0"/><rect x="5" y="1" width="3" height="12" fill="#30c030" stroke="none" stroke-width="0"/><rect x="8" y="3" width="3" height="12" fill="#2020d0" stroke="none" stroke-width="0"/><rect x="11" y="3" width="3" height="12" fill="#e02020" stroke="none" stroke-width="0"/><path d="M1 9H15" fill="none" stroke="#333" stroke-width="1.3" /></svg>
<svg class="ic" style="left:798px;top:51px" width="16" height="16" viewBox="0 0 16 16"><path d="M2.5 1.5H10L13.5 5V14.5H2.5Z" fill="#fff" stroke="#000" stroke-width="1.4"/><path d="M10 1.5V5H13.5M7 11H11V8" fill="none" stroke="#000" stroke-width="0.8" /></svg>
<svg class="ic" style="left:820px;top:51px" width="16" height="16" viewBox="0 0 16 16"><path d="M4 15V3M4 15H15" fill="none" stroke="#000" stroke-width="1.4" /><path d="M4 15L9 10" fill="none" stroke="#000" stroke-width="0.9" /><path d="M1.5 5L4 1.5L6.5 5Z" fill="#000" stroke="#000" stroke-width="0.3"/><path d="M13 12.5L16 15L13 17.5Z" fill="#000" stroke="#000" stroke-width="0.3"/></svg>
<svg class="ic" style="left:849px;top:51px" width="16" height="16" viewBox="0 0 16 16"><path d="M1 9L9 2L15 6L7 13Z" fill="#6a1a8a" stroke="#000" stroke-width="1.2"/><path d="M1 9L7 13V15L1 11Z" fill="#fff" stroke="#000" stroke-width="1"/><text x="7" y="9" font-family="Liberation Sans" font-size="6" font-weight="700" fill="#f0d020">?</text><path d="M13 18L18 13V18Z" fill="#f2f27a"/><path d="M12.5 18.2H18.2V12.5" fill="none" stroke="#000" stroke-width="1.3"/></svg>
<svg class="ic" style="left:894px;top:51px" width="16" height="16" viewBox="0 0 16 16"><ellipse cx="8.5" cy="13" rx="7" ry="2" fill="#8a8a9a"/><ellipse cx="8" cy="11.8" rx="7.2" ry="2.2" fill="#fff" stroke="#000" stroke-width="1.3"/><path d="M2.5 2.5H11.5V7Q11.5 11 7 11Q2.5 11 2.5 7Z" fill="#1a2a8a" stroke="#000" stroke-width="1.3"/><circle cx="6.5" cy="7" r="3.2" fill="#30c030"/><path d="M2.8 5H11.2" fill="none" stroke="#000" stroke-width="1" /><path d="M11.5 3.5Q15 3 14.5 6Q14 8 11 8.5" fill="none" stroke="#000" stroke-width="1.2" /></svg>
<svg class="ic" style="left:916px;top:51px" width="16" height="16" viewBox="0 0 16 16"><ellipse cx="8" cy="11.8" rx="7.2" ry="2.2" fill="#c8c8e8" stroke="#1a1a60" stroke-width="1.3"/><path d="M2.5 2.5H11.5V7Q11.5 11 7 11Q2.5 11 2.5 7Z" fill="#b0b0d8" stroke="#1a1a60" stroke-width="1.3"/><path d="M2.8 5H11.2" fill="none" stroke="#1a1a60" stroke-width="1" /><path d="M11.5 3.5Q15 3 14.5 6Q14 8 11 8.5" fill="none" stroke="#1a1a60" stroke-width="1.2" /></svg>
<svg class="ic" style="left:938px;top:51px" width="16" height="16" viewBox="0 0 16 16"><ellipse cx="8" cy="11.8" rx="7.2" ry="2.2" fill="#fff" stroke="#000" stroke-width="1.3"/><path d="M2.5 2.5H11.5V7Q11.5 11 7 11Q2.5 11 2.5 7Z" fill="#fff" stroke="#000" stroke-width="1.3"/><path d="M2.8 5H11.2" fill="none" stroke="#000" stroke-width="1" /><path d="M11.5 3.5Q15 3 14.5 6Q14 8 11 8.5" fill="none" stroke="#000" stroke-width="1.2" /></svg>
<svg class="ic" style="left:960px;top:51px" width="16" height="16" viewBox="0 0 16 16"><ellipse cx="8" cy="11.8" rx="7.2" ry="2.2" fill="#fff" stroke="#000" stroke-width="1.3"/><path d="M2.5 2.5H11.5V7Q11.5 11 7 11Q2.5 11 2.5 7Z" fill="#fff" stroke="#000" stroke-width="1.3"/><path d="M2.8 5H11.2" fill="none" stroke="#000" stroke-width="1" /><path d="M11.5 3.5Q15 3 14.5 6Q14 8 11 8.5" fill="none" stroke="#000" stroke-width="1.2" /></svg>
<svg class="ic" style="left:1005px;top:51px" width="16" height="16" viewBox="0 0 16 16"><rect x="2.5" y="2.5" width="8" height="8" fill="none" stroke="#a8a8a8" stroke-width="1"/><rect x="5.5" y="5.5" width="8" height="8" fill="none" stroke="#a8a8a8" stroke-width="1"/><rect x="1.5" y="1.5" width="2" height="2" fill="#a8a8a8" stroke="none" stroke-width="0"/><rect x="9.5" y="1.5" width="2" height="2" fill="#a8a8a8" stroke="none" stroke-width="0"/><rect x="1.5" y="9.5" width="2" height="2" fill="#a8a8a8" stroke="none" stroke-width="0"/><rect x="12.5" y="12.5" width="2" height="2" fill="#a8a8a8" stroke="none" stroke-width="0"/><rect x="12.5" y="4.5" width="2" height="2" fill="#a8a8a8" stroke="none" stroke-width="0"/><rect x="4.5" y="12.5" width="2" height="2" fill="#a8a8a8" stroke="none" stroke-width="0"/></svg>
<svg class="ic" style="left:1027px;top:51px" width="16" height="16" viewBox="0 0 16 16"><rect x="1.5" y="1.5" width="8" height="8" fill="none" stroke="#a8a8a8" stroke-width="1"/><rect x="6.5" y="6.5" width="8" height="8" fill="none" stroke="#a8a8a8" stroke-width="1"/><path d="M3 3L8 8" fill="none" stroke="#a8a8a8" stroke-width="1" /><rect x="9" y="9" width="3" height="3" fill="#aaa" stroke="none" stroke-width="0"/></svg>
<svg class="ic" style="left:1050px;top:51px" width="16" height="16" viewBox="0 0 16 16"><path d="M3 13L8 3L13 13Z" fill="#f0f0f0" stroke="#b0b0b0" stroke-width="1.3"/><circle cx="8" cy="9" r="2.5" fill="none" stroke="#b0b0b0" stroke-width="1"/><path d="M2 14H14" fill="none" stroke="#b0b0b0" stroke-width="1.3" /></svg>
<svg class="ic" style="left:1094px;top:51px" width="16" height="16" viewBox="0 0 16 16"><path d="M1.5 5L5 1.5H14.5V11L11 14.5H1.5Z" fill="#fff" stroke="#000" stroke-width="1"/><path d="M1.5 5L5 1.5V11L1.5 14.5Z" fill="#30e0e8" stroke="none"/><path d="M1.5 5L5 1.5H14.5V11L11 14.5H1.5ZM1.5 5H11L14.5 1.5M11 5V14.5" fill="none" stroke="#000" stroke-width="1.1" /><path d="M5 1.5V11H14.5M5 11L1.5 14.5" fill="none" stroke="#000" stroke-width="0.6" /></svg>
<svg class="ic" style="left:1116px;top:51px" width="16" height="16" viewBox="0 0 16 16"><path d="M1.5 5L5 1.5H14.5V11L11 14.5H1.5Z" fill="#fff" stroke="#000" stroke-width="1"/><path d="M1.5 5H11V14.5H1.5Z" fill="#30e0e8" stroke="none"/><path d="M1.5 5L5 1.5H14.5V11L11 14.5H1.5ZM1.5 5H11L14.5 1.5M11 5V14.5" fill="none" stroke="#000" stroke-width="1.1" /><path d="M5 1.5V11H14.5M5 11L1.5 14.5" fill="none" stroke="#000" stroke-width="0.6" /></svg>
<svg class="ic" style="left:1138px;top:51px" width="16" height="16" viewBox="0 0 16 16"><path d="M1.5 5L5 1.5H14.5V11L11 14.5H1.5Z" fill="#fff" stroke="#000" stroke-width="1"/><path d="M1.5 5H11V14.5H1.5Z" fill="#30e0e8" stroke="none"/><path d="M1.5 5L5 1.5H14.5V11L11 14.5H1.5ZM1.5 5H11L14.5 1.5M11 5V14.5" fill="none" stroke="#000" stroke-width="1.1" /><path d="M5 1.5V11H14.5M5 11L1.5 14.5" fill="none" stroke="#000" stroke-width="0.6" /></svg>
<svg class="ic" style="left:1160px;top:51px" width="16" height="16" viewBox="0 0 16 16"><path d="M1.5 5L5 1.5H14.5V11L11 14.5H1.5Z" fill="#fff" stroke="#000" stroke-width="1"/><path d="M1.5 14.5L5 11H14.5L11 14.5Z" fill="#30e0e8" stroke="none"/><path d="M1.5 5L5 1.5H14.5V11L11 14.5H1.5ZM1.5 5H11L14.5 1.5M11 5V14.5" fill="none" stroke="#000" stroke-width="1.1" /><path d="M5 1.5V11H14.5M5 11L1.5 14.5" fill="none" stroke="#000" stroke-width="0.6" /></svg>
<svg class="ic" style="left:1182px;top:51px" width="16" height="16" viewBox="0 0 16 16"><path d="M1.5 5L5 1.5H14.5V11L11 14.5H1.5Z" fill="#fff" stroke="#000" stroke-width="1"/><path d="M5 1.5H14.5V11H5Z" fill="#30e0e8" stroke="none"/><path d="M1.5 5L5 1.5H14.5V11L11 14.5H1.5ZM1.5 5H11L14.5 1.5M11 5V14.5" fill="none" stroke="#000" stroke-width="1.1" /><path d="M5 1.5V11H14.5M5 11L1.5 14.5" fill="none" stroke="#000" stroke-width="0.6" /></svg>
<svg class="ic" style="left:1204px;top:51px" width="16" height="16" viewBox="0 0 16 16"><path d="M1.5 5L5 1.5H14.5V11L11 14.5H1.5Z" fill="#fff" stroke="#000" stroke-width="1"/><path d="M11 5L14.5 1.5V11L11 14.5Z" fill="#30e0e8" stroke="none"/><path d="M1.5 5L5 1.5H14.5V11L11 14.5H1.5ZM1.5 5H11L14.5 1.5M11 5V14.5" fill="none" stroke="#000" stroke-width="1.1" /><path d="M5 1.5V11H14.5M5 11L1.5 14.5" fill="none" stroke="#000" stroke-width="0.6" /></svg>
<svg class="ic" style="left:1226px;top:51px" width="16" height="16" viewBox="0 0 16 16"><path d="M8 1L14.5 4.5V11.5L8 15L1.5 11.5V4.5Z" fill="#fff" stroke="#000" stroke-width="1.2"/><path d="M8 8L14.5 4.5V11.5L8 15Z" fill="#30b0b0" stroke="none"/><path d="M8 1V15M1.5 4.5L14.5 11.5M14.5 4.5L1.5 11.5" fill="none" stroke="#000" stroke-width="0.6" /><path d="M8 1L14.5 4.5V11.5L8 15L1.5 11.5V4.5Z" fill="none" stroke="#000" stroke-width="1.2" /></svg>
<svg class="ic" style="left:1248px;top:51px" width="16" height="16" viewBox="0 0 16 16"><path d="M8 1L14.5 4.5V11.5L8 15L1.5 11.5V4.5Z" fill="#fff" stroke="#000" stroke-width="1.2"/><path d="M8 8L14.5 11.5L8 15L1.5 11.5Z" fill="#30b0b0" stroke="none"/><path d="M8 1V15M1.5 4.5L14.5 11.5M14.5 4.5L1.5 11.5" fill="none" stroke="#000" stroke-width="0.6" /><path d="M8 1L14.5 4.5V11.5L8 15L1.5 11.5V4.5Z" fill="none" stroke="#000" stroke-width="1.2" /></svg>
<svg class="ic" style="left:1270px;top:51px" width="16" height="16" viewBox="0 0 16 16"><path d="M8 1L14.5 4.5V11.5L8 15L1.5 11.5V4.5Z" fill="#fff" stroke="#000" stroke-width="1.2"/><path d="M8 1L14.5 4.5L8 8V1Z" fill="#30b0b0" stroke="none"/><path d="M8 1V15M1.5 4.5L14.5 11.5M14.5 4.5L1.5 11.5" fill="none" stroke="#000" stroke-width="0.6" /><path d="M8 1L14.5 4.5V11.5L8 15L1.5 11.5V4.5Z" fill="none" stroke="#000" stroke-width="1.2" /></svg>
<svg class="ic" style="left:1292px;top:51px" width="16" height="16" viewBox="0 0 16 16"><path d="M8 1L14.5 4.5V11.5L8 15L1.5 11.5V4.5Z" fill="#fff" stroke="#000" stroke-width="1.2"/><path d="M8 8L1.5 11.5V4.5L8 1Z" fill="#30b0b0" stroke="none"/><path d="M8 1V15M1.5 4.5L14.5 11.5M14.5 4.5L1.5 11.5" fill="none" stroke="#000" stroke-width="0.6" /><path d="M8 1L14.5 4.5V11.5L8 15L1.5 11.5V4.5Z" fill="none" stroke="#000" stroke-width="1.2" /></svg>
<svg class="ic" style="left:13px;top:77px" width="16" height="16" viewBox="0 0 16 16"><path d="M1.5 5.5L5 2H13.5V11L10 14.5H1.5Z" fill="#fff" stroke="#000" stroke-width="1.3"/><path d="M1.5 5.5H10L13.5 2M10 5.5V14.5" fill="none" stroke="#000" stroke-width="1.2" /><path d="M10 5.5L13.5 2V11L10 14.5Z" fill="#a0a0a0" stroke="#000" stroke-width="0.8"/><rect x="12.0" y="0.5" width="3" height="3" fill="#fff" stroke="#1010c0" stroke-width="1"/><rect x="12.0" y="9.5" width="3" height="3" fill="#fff" stroke="#1010c0" stroke-width="1"/><rect x="0.0" y="13.0" width="3" height="3" fill="#fff" stroke="#1010c0" stroke-width="1"/></svg>
<svg class="ic" style="left:34px;top:77px" width="16" height="16" viewBox="0 0 16 16"><path d="M2 8L6 2H11L14 8V14H2Z" fill="#c8c8c8" stroke="#000" stroke-width="1.2"/><path d="M8 8L14 4V14L8 15Z" fill="#888" stroke="#000" stroke-width="0.8"/><rect x="0.5" y="7.5" width="3" height="3" fill="#fff" stroke="#1010c0" stroke-width="1"/><rect x="12.5" y="3.5" width="3" height="3" fill="#fff" stroke="#1010c0" stroke-width="1"/><rect x="6.5" y="13.5" width="3" height="3" fill="#fff" stroke="#1010c0" stroke-width="1"/><rect x="12.5" y="11.5" width="3" height="3" fill="#fff" stroke="#1010c0" stroke-width="1"/><rect x="1.5" y="12.5" width="3" height="3" fill="#fff" stroke="#1010c0" stroke-width="1"/></svg>
<svg class="ic" style="left:57px;top:77px" width="16" height="16" viewBox="0 0 16 16"><circle cx="8" cy="8" r="6.5" fill="#a8a8a8" stroke="#000" stroke-width="1.3"/><circle cx="7" cy="6" r="2.5" fill="#e8e8e8" stroke="none" stroke-width="0"/><rect x="6.5" y="6.5" width="3" height="3" fill="#fff" stroke="#1010c0" stroke-width="1"/><rect x="13.0" y="6.5" width="3" height="3" fill="#fff" stroke="#1010c0" stroke-width="1"/></svg>
<svg class="ic" style="left:79px;top:77px" width="16" height="16" viewBox="0 0 16 16"><path d="M1.5 5.5Q8 0.5 13.5 5Q16 9 14 13.5Z" fill="#9a9a9a" stroke="#000" stroke-width="1.3"/><path d="M6 4Q11 4 12.5 11" fill="none" stroke="#e8e8e8" stroke-width="1.6" /><rect x="1.0" y="4.0" width="3" height="3" fill="#fff" stroke="#1010c0" stroke-width="1"/><rect x="5.5" y="7.5" width="3" height="3" fill="#fff" stroke="#1010c0" stroke-width="1"/></svg>
<svg class="ic" style="left:101px;top:77px" width="16" height="16" viewBox="0 0 16 16"><path d="M1.5 13.5L14 2V14.5H1.5Z" fill="#fff" stroke="#000" stroke-width="1.2"/><path d="M14 2V14.5H7Z" fill="#a0b0c8" stroke="#000" stroke-width="0.8"/><rect x="12.5" y="0.5" width="3" height="3" fill="#fff" stroke="#1010c0" stroke-width="1"/><rect x="12.5" y="13.0" width="3" height="3" fill="#fff" stroke="#1010c0" stroke-width="1"/></svg>
<svg class="ic" style="left:122px;top:77px" width="16" height="16" viewBox="0 0 16 16"><path d="M1.5 7L5 2.5H11L14.5 5V11L11 14.5H5L1.5 11Z" fill="#fff" stroke="#101070" stroke-width="1.2"/><path d="M5 2.5L8 6H14.5M8 6V14.5M1.5 11H8" fill="none" stroke="#101070" stroke-width="0.8" /><path d="M3 10H6" fill="none" stroke="#101070" stroke-width="0.7" stroke-dasharray="1 1"/></svg>
<svg class="ic" style="left:144px;top:77px" width="16" height="16" viewBox="0 0 16 16"><path d="M2 5L9 1L15 5L15 10L8 15L2 11Z" fill="#fff" stroke="#1a1a80" stroke-width="1.3"/><path d="M3 8L8 11L8 14L3 11Z" fill="#a0b8d8" stroke="none" stroke-width="0"/><rect x="0.5" y="9.5" width="3" height="3" fill="#fff" stroke="#1010c0" stroke-width="1"/><rect x="7.5" y="12.5" width="3" height="3" fill="#fff" stroke="#1010c0" stroke-width="1"/></svg>
<svg class="ic" style="left:167px;top:77px" width="16" height="16" viewBox="0 0 16 16"><path d="M2 5L7 1L15 6L14 11L8 15L2 10Z" fill="#fff" stroke="#1a1a80" stroke-width="1.3"/><path d="M4 6L13 9L9 14L4 10Z" fill="#a8d0e0" stroke="none" stroke-width="0"/><rect x="11.5" y="7.5" width="3" height="3" fill="#fff" stroke="#1010c0" stroke-width="1"/><rect x="7.5" y="12.5" width="3" height="3" fill="#fff" stroke="#1010c0" stroke-width="1"/></svg>
<svg class="ic" style="left:189px;top:77px" width="16" height="16" viewBox="0 0 16 16"><path d="M2 7L8 2L15 4L13 11L7 14L2 12Z" fill="#fff" stroke="#1a1a80" stroke-width="1.2"/><path d="M3 9L13 6L11 11L4 12Z" fill="#a0b8d8" stroke="none" stroke-width="0"/><rect x="12.5" y="2.5" width="3" height="3" fill="#fff" stroke="#1010c0" stroke-width="1"/><rect x="9.5" y="9.5" width="3" height="3" fill="#fff" stroke="#1010c0" stroke-width="1"/></svg>
<svg class="ic" style="left:211px;top:77px" width="16" height="16" viewBox="0 0 16 16"><path d="M4 1V15" fill="none" stroke="#d02020" stroke-width="0.8" stroke-dasharray="1.5 1"/><path d="M10 1V6Q11 9 13 9Q15 9 15 6V1M13 9V15M11 15H15" fill="none" stroke="#000" stroke-width="1.2" /><path d="M5 8H9M8 6L10 8L8 10" fill="none" stroke="#1a1a80" stroke-width="1" /></svg>
<svg class="ic" style="left:232px;top:77px" width="16" height="16" viewBox="0 0 16 16"><path d="M1.5 4V12A6 2.5 0 0 0 13.5 12V4" fill="#f0f0f0" stroke="#000" stroke-width="1.2"/><ellipse cx="7.5" cy="4" rx="6" ry="2.5" fill="#fff" stroke="#000" stroke-width="1.2"/><path d="M8 9L13.5 7V12L8 14Z" fill="#999" stroke="none" stroke-width="0"/><rect x="12.0" y="3.5" width="3" height="3" fill="#fff" stroke="#1010c0" stroke-width="1"/><rect x="12.0" y="11.5" width="3" height="3" fill="#fff" stroke="#1010c0" stroke-width="1"/><rect x="6.5" y="12.0" width="3" height="3" fill="#fff" stroke="#1010c0" stroke-width="1"/></svg>
<svg class="ic" style="left:254px;top:77px" width="16" height="16" viewBox="0 0 16 16"><path d="M1.5 4V12A6 2.5 0 0 0 13.5 12V4" fill="#f0f0f0" stroke="#000" stroke-width="1.2"/><ellipse cx="7.5" cy="4" rx="6" ry="2.5" fill="#fff" stroke="#000" stroke-width="1.2"/><rect x="7.5" y="8.5" width="6" height="6" fill="#fff" stroke="#000" stroke-width="1"/><rect x="9" y="10" width="3" height="3" fill="#888" stroke="none" stroke-width="0"/><rect x="12.0" y="3.5" width="3" height="3" fill="#fff" stroke="#1010c0" stroke-width="1"/><rect x="12.0" y="11.5" width="3" height="3" fill="#fff" stroke="#1010c0" stroke-width="1"/></svg>
<svg class="ic" style="left:277px;top:77px" width="16" height="16" viewBox="0 0 16 16"><path d="M5 1.5H11L14.5 5V11L11 14.5H5L1.5 11V5Z" fill="#c8c8c8" stroke="#000" stroke-width="1.3"/><circle cx="8" cy="8" r="2.5" fill="#fff" stroke="#333" stroke-width="1"/><circle cx="8" cy="8" r="0.8" fill="#333" stroke="none" stroke-width="0"/></svg>
<svg class="ic" style="left:300px;top:77px" width="16" height="16" viewBox="0 0 16 16"><rect x="1.5" y="1.5" width="12" height="12" fill="#fff" stroke="#000" stroke-width="1.4"/><path d="M4.5 1.5V13.5M7.5 1.5V13.5M10.5 1.5V13.5M1.5 4.5H13.5M1.5 7.5H13.5M1.5 10.5H13.5" fill="none" stroke="#000" stroke-width="1.2" /><rect x="12.5" y="12.5" width="3" height="3" fill="#fff" stroke="#1010c0" stroke-width="1"/><rect x="0.0" y="0.0" width="3" height="3" fill="#fff" stroke="#1010c0" stroke-width="1"/></svg>
<svg class="ic" style="left:321px;top:77px" width="16" height="16" viewBox="0 0 16 16"><path d="M2 6L9 12L14 9L6 2Z" fill="#a8a8a8" stroke="#000" stroke-width="1"/><path d="M2 6V14H9L14 9" fill="none" stroke="#000" stroke-width="1" /><rect x="0.5" y="4.5" width="3" height="3" fill="#fff" stroke="#1010c0" stroke-width="1"/><rect x="0.5" y="12.5" width="3" height="3" fill="#fff" stroke="#1010c0" stroke-width="1"/><rect x="12.5" y="7.5" width="3" height="3" fill="#fff" stroke="#1010c0" stroke-width="1"/></svg>
<svg class="ic" style="left:343px;top:77px" width="16" height="16" viewBox="0 0 16 16"><text x="0" y="9" font-family="Liberation Sans" font-size="7" font-weight="700">3D</text><path d="M9 2L15 8L9 14H2" fill="none" stroke="#000" stroke-width="0.9" /><rect x="7.5" y="0.5" width="3" height="3" fill="#fff" stroke="#1010c0" stroke-width="1"/><rect x="13.5" y="6.5" width="3" height="3" fill="#fff" stroke="#1010c0" stroke-width="1"/><rect x="7.5" y="12.5" width="3" height="3" fill="#fff" stroke="#1010c0" stroke-width="1"/><rect x="0.5" y="12.5" width="3" height="3" fill="#fff" stroke="#1010c0" stroke-width="1"/></svg>
<svg class="ic" style="left:365px;top:77px" width="16" height="16" viewBox="0 0 16 16"><text x="4" y="14" font-family="Liberation Sans" font-size="7" font-weight="700">3D</text><path d="M2 14Q8 -1 14 14" fill="none" stroke="#000" stroke-width="0.9" /><rect x="0.5" y="12.5" width="3" height="3" fill="#fff" stroke="#1010c0" stroke-width="1"/><rect x="3.5" y="0.5" width="3" height="3" fill="#fff" stroke="#1010c0" stroke-width="1"/><rect x="9.5" y="0.5" width="3" height="3" fill="#fff" stroke="#1010c0" stroke-width="1"/><rect x="12.5" y="12.5" width="3" height="3" fill="#fff" stroke="#1010c0" stroke-width="1"/></svg>
<svg class="ic" style="left:387px;top:77px" width="16" height="16" viewBox="0 0 16 16"><text x="0" y="14" font-family="Liberation Sans" font-size="7" font-weight="700">3D</text><path d="M6 6Q8 1 14 2" fill="none" stroke="#000" stroke-width="1" /><rect x="4.5" y="4.5" width="3" height="3" fill="#fff" stroke="#1010c0" stroke-width="1"/><rect x="12.5" y="0.5" width="3" height="3" fill="#fff" stroke="#1010c0" stroke-width="1"/><rect x="6.5" y="6.5" width="3" height="3" fill="#fff" stroke="#1010c0" stroke-width="1"/></svg>
<svg class="ic" style="left:432px;top:77px" width="16" height="16" viewBox="0 0 16 16"><circle cx="7" cy="9" r="5.5" fill="#d8d8d8" stroke="#c0c0c0" stroke-width="1"/><circle cx="10" cy="6" r="4" fill="#e0e0e0" stroke="#c0c0c0" stroke-width="1"/></svg>
<svg class="ic" style="left:454px;top:77px" width="16" height="16" viewBox="0 0 16 16"><rect x="1.5" y="5.5" width="8" height="8" fill="#ddd" stroke="#b8b8b8" stroke-width="1"/><rect x="5.5" y="2.5" width="8" height="8" fill="none" stroke="#c0c0c0" stroke-width="1"/><circle cx="11" cy="5" r="4" fill="none" stroke="#c8c8c8" stroke-width="1"/></svg>
<svg class="ic" style="left:476px;top:77px" width="16" height="16" viewBox="0 0 16 16"><rect x="3.5" y="5.5" width="7" height="7" fill="#e4e4e4" stroke="#b8b8b8" stroke-width="1"/><rect x="6.5" y="2.5" width="6" height="6" fill="none" stroke="#c0c0c0" stroke-width="1"/><circle cx="10" cy="7" r="5" fill="none" stroke="#c8c8c8" stroke-width="1"/></svg>
<svg class="ic" style="left:498px;top:77px" width="16" height="16" viewBox="0 0 16 16"><circle cx="8" cy="8" r="6.5" fill="#c8c8c8" stroke="#a8a8a8" stroke-width="1"/><path d="M3 5L11 13M5 3L13 11M2 8L8 14" fill="none" stroke="#eee" stroke-width="1" /></svg>
<svg class="ic" style="left:526px;top:77px" width="16" height="16" viewBox="0 0 16 16"><path d="M1.5 6.5H9V14.5H1.5Z" fill="#1a6090" stroke="#000" stroke-width="1"/><circle cx="9" cy="6" r="5" fill="#1a6090" stroke="#000" stroke-width="1"/><rect x="2" y="7" width="7" height="7" fill="#1a6090" stroke="none" stroke-width="0"/></svg>
<svg class="ic" style="left:548px;top:77px" width="16" height="16" viewBox="0 0 16 16"><circle cx="10" cy="6" r="5" fill="#fff" stroke="#000" stroke-width="1"/><path d="M1.5 6.5H9V14.5H1.5Z" fill="#1a6090" stroke="#000" stroke-width="1"/></svg>
<svg class="ic" style="left:569px;top:77px" width="16" height="16" viewBox="0 0 16 16"><circle cx="10" cy="6" r="5" fill="#fff" stroke="#000" stroke-width="1"/><rect x="1.5" y="6.5" width="8" height="8" fill="#fff" stroke="#000" stroke-width="1"/><path d="M5 6.5H9.5V11Q7 11 5 9Z" fill="#1a6090" stroke="none" stroke-width="0"/></svg>
<svg class="ic" style="left:615px;top:77px" width="16" height="16" viewBox="0 0 16 16"><path d="M4 14V2M4 14H15" fill="none" stroke="#000" stroke-width="1.3" /><path d="M2 4L4 1L6 4Z" fill="#000" stroke="#000" stroke-width="0.3"/><path d="M13 12L16 14L13 16Z" fill="#000" stroke="#000" stroke-width="0.3"/><rect x="7.5" y="7.5" width="3" height="3" fill="#fff" stroke="#1010c0" stroke-width="1"/><path d="M1 10L3 12M3 10L1 12" fill="none" stroke="#2020c0" stroke-width="0.8" /></svg>
<svg class="ic" style="left:636px;top:77px" width="16" height="16" viewBox="0 0 16 16"><path d="M1 8L7 2L14 9L8 15Z" fill="#fff" stroke="#000" stroke-width="1"/><path d="M5 7L10 12" fill="none" stroke="#000" stroke-width="0.8" /><text x="10" y="7" font-family="Liberation Sans" font-size="7" font-weight="700" fill="#1a1a80">?</text></svg>
<svg class="ic" style="left:658px;top:77px" width="16" height="16" viewBox="0 0 16 16"><path d="M1 14H15M1 14L8 2L11 14" fill="none" stroke="#000" stroke-width="1.1" /><text x="10" y="7" font-family="Liberation Sans" font-size="7" font-weight="700" fill="#1a1a80">?</text></svg>
<svg class="ic" style="left:681px;top:77px" width="16" height="16" viewBox="0 0 16 16"><rect x="1.5" y="2.5" width="13" height="11" fill="#a8b0c8" stroke="#000" stroke-width="1.6"/><rect x="3" y="4" width="1" height="1" fill="#404880"/><rect x="3" y="6" width="1" height="1" fill="#404880"/><rect x="3" y="8" width="1" height="1" fill="#404880"/><rect x="3" y="10" width="1" height="1" fill="#404880"/><rect x="3" y="12" width="1" height="1" fill="#404880"/><rect x="5" y="4" width="1" height="1" fill="#404880"/><rect x="5" y="6" width="1" height="1" fill="#404880"/><rect x="5" y="8" width="1" height="1" fill="#404880"/><rect x="5" y="10" width="1" height="1" fill="#404880"/><rect x="5" y="12" width="1" height="1" fill="#404880"/><rect x="7" y="4" width="1" height="1" fill="#404880"/><rect x="7" y="6" width="1" height="1" fill="#404880"/><rect x="7" y="8" width="1" height="1" fill="#404880"/><rect x="7" y="10" width="1" height="1" fill="#404880"/><rect x="7" y="12" width="1" height="1" fill="#404880"/><rect x="9" y="4" width="1" height="1" fill="#404880"/><rect x="9" y="6" width="1" height="1" fill="#404880"/><rect x="9" y="8" width="1" height="1" fill="#404880"/><rect x="9" y="10" width="1" height="1" fill="#404880"/><rect x="9" y="12" width="1" height="1" fill="#404880"/><rect x="11" y="4" width="1" height="1" fill="#404880"/><rect x="11" y="6" width="1" height="1" fill="#404880"/><rect x="11" y="8" width="1" height="1" fill="#404880"/><rect x="11" y="10" width="1" height="1" fill="#404880"/><rect x="11" y="12" width="1" height="1" fill="#404880"/><rect x="13" y="4" width="1" height="1" fill="#404880"/><rect x="13" y="6" width="1" height="1" fill="#404880"/><rect x="13" y="8" width="1" height="1" fill="#404880"/><rect x="13" y="10" width="1" height="1" fill="#404880"/><rect x="13" y="12" width="1" height="1" fill="#404880"/><path d="M4 8H12" fill="none" stroke="#1010a0" stroke-width="1.2" /><path d="M4 8L6 6V10Z" fill="#1010a0" stroke="none" stroke-width="0"/><path d="M12 8L10 6V10Z" fill="#1010a0" stroke="none" stroke-width="0"/></svg>
<svg class="ic" style="left:725px;top:77px" width="16" height="16" viewBox="0 0 16 16"><rect x="1.5" y="1.5" width="9" height="9" fill="none" stroke="#a02020" stroke-width="1.2"/><rect x="3.5" y="3.5" width="9" height="9" fill="none" stroke="#000" stroke-width="1.3"/><rect x="5.5" y="5.5" width="9" height="9" fill="#fff" stroke="#000" stroke-width="1.3"/></svg>
<svg class="ic" style="left:748px;top:77px" width="16" height="16" viewBox="0 0 16 16"><rect x="1.5" y="1.5" width="5" height="5" fill="none" stroke="#a02020" stroke-width="1.2"/><rect x="9.5" y="1.5" width="5" height="5" fill="none" stroke="#000" stroke-width="1.2"/><rect x="1.5" y="9.5" width="5" height="5" fill="none" stroke="#000" stroke-width="1.2"/><rect x="9.5" y="9.5" width="5" height="5" fill="none" stroke="#000" stroke-width="1.2"/></svg>
<svg class="ic" style="left:770px;top:77px" width="16" height="16" viewBox="0 0 16 16"><circle cx="8" cy="3" r="2" fill="none" stroke="#a02020" stroke-width="1"/><circle cx="3" cy="8" r="2" fill="none" stroke="#000" stroke-width="1"/><circle cx="13" cy="8" r="2" fill="none" stroke="#000" stroke-width="1"/><circle cx="8" cy="13" r="2" fill="none" stroke="#000" stroke-width="1"/></svg>
<svg class="ic" style="left:793px;top:77px" width="16" height="16" viewBox="0 0 16 16"><rect x="2.5" y="2.5" width="8" height="8" fill="none" stroke="#a02020" stroke-width="1.2"/><rect x="4.5" y="4.5" width="8" height="8" fill="none" stroke="#000" stroke-width="1.2"/><rect x="6.5" y="6.5" width="7" height="7" fill="#fff" stroke="#000" stroke-width="1.2"/></svg>
<svg class="ic" style="left:815px;top:77px" width="16" height="16" viewBox="0 0 16 16"><rect x="2.5" y="1.5" width="4" height="5" fill="none" stroke="#a02020" stroke-width="1.2"/><rect x="9.5" y="1.5" width="4" height="5" fill="none" stroke="#000" stroke-width="1.2"/><rect x="2.5" y="9.5" width="4" height="5" fill="none" stroke="#000" stroke-width="1.2"/><rect x="9.5" y="9.5" width="4" height="5" fill="none" stroke="#000" stroke-width="1.2"/></svg>
<svg class="ic" style="left:836px;top:77px" width="16" height="16" viewBox="0 0 16 16"><circle cx="8" cy="4" r="2.5" fill="none" stroke="#a02020" stroke-width="1.1"/><circle cx="4" cy="8" r="2.5" fill="none" stroke="#000" stroke-width="1.1"/><circle cx="12" cy="8" r="2.5" fill="none" stroke="#000" stroke-width="1.1"/><circle cx="8" cy="12" r="2.5" fill="none" stroke="#000" stroke-width="1.1"/></svg>
<svg class="ic" style="left:858px;top:77px" width="16" height="16" viewBox="0 0 16 16"><path d="M2 1V14H8Z" fill="#fff" stroke="#a0a0a0" stroke-width="1"/><path d="M15 1V14H9Z" fill="#c02020" stroke="#000" stroke-width="1"/><rect x="13" y="1" width="2" height="6" fill="#f0f080" stroke="none" stroke-width="0"/></svg>
<svg class="ic" style="left:876px;top:77px" width="16" height="16" viewBox="0 0 16 16"><path d="M8 1L13 6H8Z" fill="#a02020" stroke="#000" stroke-width="1"/><path d="M1 9L6 14H1Z" fill="#fff" stroke="#1a1a80" stroke-width="1"/></svg>
<svg class="ic" style="left:924px;top:77px" width="16" height="16" viewBox="0 0 16 16"><path d="M2 14L14 2" fill="none" stroke="#1a1a80" stroke-width="1.3" /><path d="M4 10L9 5M6 12L11 7" fill="none" stroke="#1a1a80" stroke-width="0.8" /><path d="M3 8L7 7L6 11Z" fill="#2020c0" stroke="none" stroke-width="0"/><path d="M13 8L9 9L10 5Z" fill="#2020c0" stroke="none" stroke-width="0"/></svg>
<svg class="ic" style="left:947px;top:77px" width="16" height="16" viewBox="0 0 16 16"><path d="M1 12L8 5M8 14L15 7" fill="none" stroke="#a02020" stroke-width="1" /><path d="M4 9L8 13M8 5L12 9" fill="none" stroke="#000" stroke-width="1" /></svg>
<svg class="ic" style="left:969px;top:77px" width="16" height="16" viewBox="0 0 16 16"><path d="M2 10Q2 3 8 3Q14 3 14 10Q14 14 11 15" fill="none" stroke="#a02020" stroke-width="1.2"/><path d="M6 14L10 6" fill="none" stroke="#000" stroke-width="0.6" stroke-dasharray="1 1"/></svg>
<svg class="ic" style="left:991px;top:77px" width="16" height="16" viewBox="0 0 16 16"><path d="M2 2L14 14" fill="none" stroke="#a02020" stroke-width="1.2" /><path d="M14 2L2 14" fill="none" stroke="#000" stroke-width="1.2" /></svg>
<svg class="ic" style="left:1013px;top:77px" width="16" height="16" viewBox="0 0 16 16"><path d="M6 12L14 4M8 14L15 7M10 15L15 10" fill="none" stroke="#1a1a80" stroke-width="1.1" /><path d="M1 5L5 2L4 7Z" fill="#2020c0" stroke="none" stroke-width="0"/></svg>
<svg class="ic" style="left:1034px;top:77px" width="16" height="16" viewBox="0 0 16 16"><rect x="1.5" y="2.5" width="9" height="9" fill="#fff" stroke="#000" stroke-width="1.3"/><path d="M7 7L14 14H7Z" fill="none" stroke="#a02020" stroke-width="1"/><rect x="7" y="7" width="7" height="7" fill="none" stroke="#a02020" stroke-width="1"/><path d="M10 2L13 5" fill="none" stroke="#2020c0" stroke-width="1.1" /></svg>
<svg class="ic" style="left:1056px;top:77px" width="16" height="16" viewBox="0 0 16 16"><circle cx="8" cy="8" r="6.3" fill="none" stroke="#8a1010" stroke-width="1.3"/></svg>
<svg class="ic" style="left:1079px;top:77px" width="16" height="16" viewBox="0 0 16 16"><path d="M2 2L7 14M2 2L14 5" fill="none" stroke="#a02020" stroke-width="1.3" /><path d="M1 1.5L4 2" fill="none" stroke="#000" stroke-width="1.2" /></svg>
<svg class="ic" style="left:1107px;top:77px" width="16" height="16" viewBox="0 0 16 16"><path d="M2 1V7Q2 14 9 14H15" fill="none" stroke="#a02020" stroke-width="1.3" /></svg>
<svg class="ic" style="left:1128px;top:77px" width="16" height="16" viewBox="0 0 16 16"><path d="M2 14L13 3" fill="none" stroke="#c02020" stroke-width="1" /><path d="M2 13V15M2 14H9M9 13V15" fill="none" stroke="#1a1a80" stroke-width="1" /><path d="M12 2L14 4M12 7V10" fill="none" stroke="#1a1a80" stroke-width="1" /></svg>
<svg class="ic" style="left:1152px;top:77px" width="16" height="16" viewBox="0 0 16 16"><path d="M2 14L11 3" fill="none" stroke="#c02020" stroke-width="1" /><path d="M2 13V15M2 14H8M8 13V15" fill="none" stroke="#1a1a80" stroke-width="1" /><path d="M12 5L13 9M11 5H14" fill="none" stroke="#1a1a80" stroke-width="1.1" /></svg>
<svg class="ic" style="left:1174px;top:77px" width="16" height="16" viewBox="0 0 16 16"><path d="M2 13L11 4" fill="none" stroke="#c02020" stroke-width="1.2" /><path d="M3 14L12 5" fill="none" stroke="#000" stroke-width="0.9" /><path d="M12 6L13 10M11 6H14" fill="none" stroke="#1a1a80" stroke-width="1.1" /></svg>
<svg class="ic" style="left:1201px;top:77px" width="16" height="16" viewBox="0 0 16 16"><path d="M2 12L8 5L14 12M4 15L8 10L12 15" fill="none" stroke="#b8b8b8" stroke-width="1.2" /></svg>
<svg class="ic" style="left:1223px;top:77px" width="16" height="16" viewBox="0 0 16 16"><path d="M6 1V6H1M10 1V6H15M6 15V10H1M10 15V10H15" fill="none" stroke="#b8b8b8" stroke-width="1.2" /></svg>
<svg class="ic" style="left:1251px;top:77px" width="16" height="16" viewBox="0 0 16 16"><circle cx="5" cy="5" r="3.5" fill="none" stroke="#000" stroke-width="1.1"/><path d="M3 6V4M6 6V4" fill="none" stroke="#000" stroke-width="0.8" /><path d="M9 9L12 6L15 9H13V15H11V9Z" fill="#fff" stroke="#a02020" stroke-width="1.2"/><path d="M6 1Q11 0 12 4" fill="none" stroke="#000" stroke-width="0.8" /></svg>
<svg class="ic" style="left:1273px;top:77px" width="16" height="16" viewBox="0 0 16 16"><circle cx="8" cy="8" r="6" fill="#e04040" stroke="#802020" stroke-width="1"/><rect x="6" y="2" width="4" height="12" fill="#fff" stroke="#802020" stroke-width="1"/><rect x="2" y="6" width="12" height="4" fill="none" stroke="#802020" stroke-width="1"/><rect x="7" y="4" width="2" height="8" fill="#e04040" stroke="none" stroke-width="0"/></svg>
<svg class="ic" style="left:5px;top:139px" width="16" height="16" viewBox="0 0 16 16"><path d="M4 1V13L7 10L9.5 15L11.5 14L9 9H13Z" fill="#fff" stroke="#000" stroke-width="1.3"/><path d="M13 18L18 13V18Z" fill="#f2f27a"/><path d="M12.5 18.2H18.2V12.5" fill="none" stroke="#000" stroke-width="1.3"/></svg>
<svg class="ic" style="left:5px;top:162px" width="16" height="16" viewBox="0 0 16 16"><path d="M1 12L14 1" fill="none" stroke="#000" stroke-width="0.8" stroke-dasharray="1.5 1.5"/><rect x="2.5" y="7.5" width="3" height="3" fill="#fff" stroke="#1010c0" stroke-width="1"/><rect x="7.5" y="3.5" width="3" height="3" fill="#fff" stroke="#1010c0" stroke-width="1"/><path d="M13 18L18 13V18Z" fill="#f2f27a"/><path d="M12.5 18.2H18.2V12.5" fill="none" stroke="#000" stroke-width="1.3"/></svg>
<svg class="ic" style="left:5px;top:184px" width="16" height="16" viewBox="0 0 16 16"><circle cx="7" cy="8" r="1.5" fill="#000" stroke="none" stroke-width="0"/><path d="M13 18L18 13V18Z" fill="#f2f27a"/><path d="M12.5 18.2H18.2V12.5" fill="none" stroke="#000" stroke-width="1.3"/></svg>
<svg class="ic" style="left:5px;top:206px" width="16" height="16" viewBox="0 0 16 16"><path d="M3 13L11 4" fill="none" stroke="#000" stroke-width="1" /><rect x="1.5" y="11.5" width="3" height="3" fill="#fff" stroke="#1010c0" stroke-width="1"/><rect x="9.5" y="2.5" width="3" height="3" fill="#fff" stroke="#1010c0" stroke-width="1"/><path d="M13 18L18 13V18Z" fill="#f2f27a"/><path d="M12.5 18.2H18.2V12.5" fill="none" stroke="#000" stroke-width="1.3"/></svg>
<svg class="ic" style="left:5px;top:228px" width="16" height="16" viewBox="0 0 16 16"><rect x="1.5" y="1.5" width="13" height="13" fill="none" stroke="#000" stroke-width="1.6"/><rect x="4.5" y="4.5" width="7" height="7" fill="none" stroke="#000" stroke-width="1.3"/><rect x="0.5" y="0.5" width="3" height="3" fill="#fff" stroke="#1010c0" stroke-width="1"/><rect x="12.5" y="12.5" width="3" height="3" fill="#fff" stroke="#1010c0" stroke-width="1"/><path d="M13 18L18 13V18Z" fill="#f2f27a"/><path d="M12.5 18.2H18.2V12.5" fill="none" stroke="#000" stroke-width="1.3"/></svg>
<svg class="ic" style="left:5px;top:249px" width="16" height="16" viewBox="0 0 16 16"><path d="M1 10L9 2M4 13L12 5" fill="none" stroke="#000" stroke-width="0.8" stroke-dasharray="1.5 1"/><rect x="8.5" y="1.5" width="3" height="3" fill="#fff" stroke="#1010c0" stroke-width="1"/><rect x="3.5" y="10.5" width="3" height="3" fill="#fff" stroke="#1010c0" stroke-width="1"/><path d="M13 18L18 13V18Z" fill="#f2f27a"/><path d="M12.5 18.2H18.2V12.5" fill="none" stroke="#000" stroke-width="1.3"/></svg>
<svg class="ic" style="left:5px;top:272px" width="16" height="16" viewBox="0 0 16 16"><circle cx="7.5" cy="8" r="6" fill="none" stroke="#000" stroke-width="1.2"/><rect x="6.0" y="6.5" width="3" height="3" fill="#fff" stroke="#1010c0" stroke-width="1"/><rect x="12.0" y="6.5" width="3" height="3" fill="#fff" stroke="#1010c0" stroke-width="1"/><path d="M13 18L18 13V18Z" fill="#f2f27a"/><path d="M12.5 18.2H18.2V12.5" fill="none" stroke="#000" stroke-width="1.3"/></svg>
<svg class="ic" style="left:5px;top:294px" width="16" height="16" viewBox="0 0 16 16"><path d="M2 13Q1 3 8 3Q14 3 14 9" fill="none" stroke="#000" stroke-width="1.2"/><path d="M8 9H14" fill="none" stroke="#1010c0" stroke-width="0.8" /><rect x="0.5" y="11.5" width="3" height="3" fill="#fff" stroke="#1010c0" stroke-width="1"/><rect x="6.5" y="7.5" width="3" height="3" fill="#fff" stroke="#1010c0" stroke-width="1"/><rect x="12.5" y="7.5" width="3" height="3" fill="#fff" stroke="#1010c0" stroke-width="1"/><path d="M13 18L18 13V18Z" fill="#f2f27a"/><path d="M12.5 18.2H18.2V12.5" fill="none" stroke="#000" stroke-width="1.3"/></svg>
<svg class="ic" style="left:5px;top:316px" width="16" height="16" viewBox="0 0 16 16"><path d="M2 14Q8 -2 14 14" fill="none" stroke="#000" stroke-width="1.2"/><rect x="0.5" y="12.5" width="3" height="3" fill="#fff" stroke="#1010c0" stroke-width="1"/><rect x="2.5" y="2.5" width="3" height="3" fill="#fff" stroke="#1010c0" stroke-width="1"/><rect x="10.5" y="2.5" width="3" height="3" fill="#fff" stroke="#1010c0" stroke-width="1"/><rect x="12.5" y="12.5" width="3" height="3" fill="#fff" stroke="#1010c0" stroke-width="1"/><path d="M13 18L18 13V18Z" fill="#f2f27a"/><path d="M12.5 18.2H18.2V12.5" fill="none" stroke="#000" stroke-width="1.3"/></svg>
<svg class="ic" style="left:5px;top:338px" width="16" height="16" viewBox="0 0 16 16"><path d="M1.5 5.5L5 2H14V11L10.5 14.5H1.5Z" fill="#fff" stroke="#000" stroke-width="1.4"/><path d="M1.5 5.5H10.5L14 2M10.5 5.5V14.5" fill="none" stroke="#000" stroke-width="1.2" /><rect x="12.5" y="0.5" width="3" height="3" fill="#fff" stroke="#1010c0" stroke-width="1"/><rect x="12.5" y="9.5" width="3" height="3" fill="#fff" stroke="#1010c0" stroke-width="1"/><rect x="0.0" y="13.0" width="3" height="3" fill="#fff" stroke="#1010c0" stroke-width="1"/><rect x="9.0" y="13.0" width="3" height="3" fill="#fff" stroke="#1010c0" stroke-width="1"/><path d="M13 18L18 13V18Z" fill="#f2f27a"/><path d="M12.5 18.2H18.2V12.5" fill="none" stroke="#000" stroke-width="1.3"/></svg>
<svg class="ic" style="left:5px;top:360px" width="16" height="16" viewBox="0 0 16 16"><path d="M3 6L10 2V12L3 15Z" fill="#888" stroke="#000" stroke-width="1.2"/><path d="M3 6L10 2L12 3L5 7Z" fill="#ccc" stroke="#000" stroke-width="0.8"/><rect x="1.5" y="13.5" width="3" height="3" fill="#fff" stroke="#1010c0" stroke-width="1"/><rect x="9.5" y="10.5" width="3" height="3" fill="#fff" stroke="#1010c0" stroke-width="1"/><path d="M13 18L18 13V18Z" fill="#f2f27a"/><path d="M12.5 18.2H18.2V12.5" fill="none" stroke="#000" stroke-width="1.3"/></svg>
<svg class="ic" style="left:5px;top:382px" width="16" height="16" viewBox="0 0 16 16"><path d="M8 1V15M1 8H15" fill="none" stroke="#000" stroke-width="1.2" /><path d="M5.5 3.5L8 1L10.5 3.5M5.5 12.5L8 15L10.5 12.5M3.5 5.5L1 8L3.5 10.5M12.5 5.5L15 8L12.5 10.5" fill="none" stroke="#000" stroke-width="1.2" /><path d="M1 0H15" fill="none" stroke="#000" stroke-width="0.8" /><path d="M13 18L18 13V18Z" fill="#f2f27a"/><path d="M12.5 18.2H18.2V12.5" fill="none" stroke="#000" stroke-width="1.3"/></svg>
<svg class="ic" style="left:5px;top:404px" width="16" height="16" viewBox="0 0 16 16"><text x="1" y="15" font-family="Liberation Sans" font-size="16" font-weight="700" fill="#000">A</text><path d="M13 18L18 13V18Z" fill="#f2f27a"/><path d="M12.5 18.2H18.2V12.5" fill="none" stroke="#000" stroke-width="1.3"/></svg>
<svg class="ic" style="left:5px;top:426px" width="16" height="16" viewBox="0 0 16 16"><path d="M1.5 1.5H10V10H1.5Z" fill="#fff" stroke="#000" stroke-width="1"/><rect x="3" y="2" width="4" height="4" fill="#e02020" stroke="none" stroke-width="0"/><rect x="5.5" y="5.5" width="9" height="9" fill="#1010d0" stroke="#000" stroke-width="1"/><path d="M6 14L14 6" fill="none" stroke="#8080ff" stroke-width="0.8" /><path d="M13 18L18 13V18Z" fill="#f2f27a"/><path d="M12.5 18.2H18.2V12.5" fill="none" stroke="#000" stroke-width="1.3"/></svg>
<svg class="ic" style="left:5px;top:448px" width="16" height="16" viewBox="0 0 16 16"><circle cx="8" cy="8" r="6.5" fill="#fff" stroke="#60c010" stroke-width="2"/><path d="M4.5 4.5L7 7M11.5 4.5L9 7M4.5 11.5L7 9M11.5 11.5L9 9" fill="none" stroke="#1a1a80" stroke-width="1.3" /><path d="M13 18L18 13V18Z" fill="#f2f27a"/><path d="M12.5 18.2H18.2V12.5" fill="none" stroke="#000" stroke-width="1.3"/></svg>
<svg class="ic" style="left:5px;top:470px" width="16" height="16" viewBox="0 0 16 16"><rect x="1" y="2" width="6" height="4" fill="#333" stroke="#000" stroke-width="0.8"/><circle cx="4" cy="4" r="1" fill="#fff" stroke="none" stroke-width="0"/><path d="M4 14L13 6" fill="none" stroke="#000" stroke-width="0.8" /><rect x="2.5" y="12.5" width="3" height="3" fill="#fff" stroke="#1010c0" stroke-width="1"/><rect x="7.5" y="8.5" width="3" height="3" fill="#fff" stroke="#1010c0" stroke-width="1"/><rect x="11.5" y="4.5" width="3" height="3" fill="#fff" stroke="#1010c0" stroke-width="1"/><path d="M13 18L18 13V18Z" fill="#f2f27a"/><path d="M12.5 18.2H18.2V12.5" fill="none" stroke="#000" stroke-width="1.3"/></svg>
<svg class="ic" style="left:5px;top:497px" width="16" height="16" viewBox="0 0 16 16"><circle cx="5" cy="5" r="3.5" fill="none" stroke="#000" stroke-width="1.1"/><path d="M3.5 6.5V3.5M6.5 6.5V3.5" fill="none" stroke="#000" stroke-width="0.9" /><path d="M9 10L12 6L15 10H13V15H11V10Z" fill="#fff" stroke="#a02020" stroke-width="1.3"/><path d="M6 1Q11 0 12 4" fill="none" stroke="#000" stroke-width="0.8" /><path d="M13 18L18 13V18Z" fill="#f2f27a"/><path d="M12.5 18.2H18.2V12.5" fill="none" stroke="#000" stroke-width="1.3"/></svg>
<svg class="ic" style="left:5px;top:519px" width="16" height="16" viewBox="0 0 16 16"><rect x="2" y="5" width="8" height="8" fill="#ddd" stroke="#aaa" stroke-width="1"/><rect x="5" y="2" width="8" height="8" fill="none" stroke="#c0c0c0" stroke-width="1"/><circle cx="10" cy="6" r="5" fill="none" stroke="#ccc" stroke-width="0.8"/><path d="M13 18L18 13V18Z" fill="#f2f27a"/><path d="M12.5 18.2H18.2V12.5" fill="none" stroke="#000" stroke-width="1.3"/></svg>
<svg class="ic" style="left:5px;top:542px" width="16" height="16" viewBox="0 0 16 16"><path d="M1 4L5 1L9 5L5 8Z" fill="#f0e020" stroke="#000" stroke-width="1.3"/><rect x="7.5" y="7.5" width="3" height="3" fill="#fff" stroke="#1010c0" stroke-width="1"/><rect x="11.5" y="10.5" width="3" height="3" fill="#fff" stroke="#1010c0" stroke-width="1"/><rect x="4.5" y="10.5" width="3" height="3" fill="#fff" stroke="#1010c0" stroke-width="1"/><path d="M13 18L18 13V18Z" fill="#f2f27a"/><path d="M12.5 18.2H18.2V12.5" fill="none" stroke="#000" stroke-width="1.3"/></svg>
<svg class="ic" style="left:5px;top:563px" width="16" height="16" viewBox="0 0 16 16"><path d="M2 9L6 7L10 9V14L6 16L2 14Z" fill="#fff" stroke="#aaa" stroke-width="1"/><path d="M8 3L11 1L15 3V7L11 8Z" fill="#ccc" stroke="#aaa" stroke-width="0.8"/><path d="M12 10V13H9" fill="none" stroke="#aaa" stroke-width="1" /></svg>
<svg class="ic" style="left:5px;top:591px" width="16" height="16" viewBox="0 0 16 16"><rect x="3" y="4" width="10" height="9" fill="none" stroke="#999" stroke-width="1"/><rect x="1.5" y="2.5" width="3" height="3" fill="#aaa" stroke="none" stroke-width="0"/><rect x="11.5" y="2.5" width="3" height="3" fill="#aaa" stroke="none" stroke-width="0"/><rect x="1.5" y="11.5" width="3" height="3" fill="#aaa" stroke="none" stroke-width="0"/><rect x="11.5" y="11.5" width="3" height="3" fill="#aaa" stroke="none" stroke-width="0"/><rect x="6.5" y="-0.5" width="3" height="3" fill="#aaa" stroke="none" stroke-width="0"/><rect x="6.5" y="11.5" width="3" height="3" fill="#aaa" stroke="none" stroke-width="0"/><rect x="1.5" y="7.0" width="3" height="3" fill="#aaa" stroke="none" stroke-width="0"/></svg>
<div class="a" style="left:4px;top:381px;width:17px;height:1px;background:#c0c0c0"></div>
<div class="a" style="left:4px;top:490px;width:17px;height:1px;background:#c0c0c0"></div>
<div class="a" style="left:4px;top:584px;width:17px;height:1px;background:#c0c0c0"></div>
<svg class="ic" style="left:1348px;top:131px" width="16" height="16" viewBox="0 0 16 16"><path d="M2.5 3.5L9 10" fill="none" stroke="#1010d0" stroke-width="1.8" /><path d="M1 1L6 1.5L1.5 6Z" fill="#1010d0" stroke="none" stroke-width="0"/><path d="M10.5 11.5L5.5 11L10 6.5Z" fill="#1010d0" stroke="none" stroke-width="0"/><text x="8.5" y="10" font-family="Liberation Sans" font-size="11" font-weight="700" fill="#1010d0">?</text><circle cx="11" cy="14" r="0.9" fill="#1010d0" stroke="none" stroke-width="0"/></svg>
<svg class="ic" style="left:1348px;top:156px" width="16" height="16" viewBox="0 0 16 16"><path d="M1 8L7 5L11 9V14L5 16L1 13Z" fill="#e81010" stroke="#000" stroke-width="1.5"/><path d="M2 4L6 1.5M6 1.5L10 5L14 9" fill="none" stroke="#000" stroke-width="1.5" /><path d="M8 4L13 3.5L14.5 8.5L10 10Z" fill="#fff" stroke="#000" stroke-width="1.1"/><path d="M10 5L13 5M10.5 7L13.5 7" fill="none" stroke="#000" stroke-width="0.8" /></svg>
<svg class="ic" style="left:1348px;top:271px" width="16" height="16" viewBox="0 0 16 16"><rect x="3.5" y="1.5" width="10" height="10" fill="none" stroke="#101070" stroke-width="2"/><rect x="5.5" y="3.5" width="6" height="6" fill="none" stroke="#101070" stroke-width="1"/><rect x="1.5" y="7.5" width="7" height="7" fill="#fff" stroke="#000" stroke-width="1.3"/><path d="M3 13L7 9" fill="none" stroke="#000" stroke-width="1.2" /><rect x="2.0" y="0.0" width="3" height="3" fill="#101070" stroke="none" stroke-width="0"/><rect x="12.0" y="0.0" width="3" height="3" fill="#101070" stroke="none" stroke-width="0"/><rect x="12.0" y="10.0" width="3" height="3" fill="#101070" stroke="none" stroke-width="0"/></svg>
<svg class="ic" style="left:1348px;top:295px" width="16" height="16" viewBox="0 0 16 16"><circle cx="8" cy="8" r="7" fill="#1a30b0" stroke="#000" stroke-width="1"/><path d="M7 2Q12 3 11 7Q14 9 12 13Q9 12 8 8Q6 5 7 2Z" fill="#30b040" stroke="none" stroke-width="0"/></svg>
<svg class="ic" style="left:1348px;top:320px" width="16" height="16" viewBox="0 0 16 16"><path d="M1 3H6L7 5H15V14H1Z" fill="#f0e880" stroke="#000" stroke-width="1.2"/><circle cx="8" cy="9" r="3" fill="#60c0e0" stroke="#000" stroke-width="1.2"/><path d="M10 11L13 14" fill="none" stroke="#000" stroke-width="1.6" /></svg>
<svg class="ic" style="left:1348px;top:344px" width="16" height="16" viewBox="0 0 16 16"><rect x="1" y="2" width="14" height="12" fill="#80a070" stroke="#000" stroke-width="1.2"/><rect x="1" y="10" width="14" height="4" fill="#706040" stroke="none" stroke-width="0"/><path d="M6 13V6M4 8L6 5L8 8" fill="none" stroke="#20b020" stroke-width="1.5" /><path d="M11 3Q13 3 13 5" fill="none" stroke="#fff" stroke-width="1" /></svg>
<div class="a" style="left:1167px;top:643px;width:22px;height:24px;border-top:1px solid #a0a0a0;border-left:1px solid #a0a0a0;background:#f7f7f7"></div>
<svg class="ic" style="left:1045px;top:647px" width="16" height="16" viewBox="0 0 16 16"><path d="M3 8L8 3H13L15 5L10 10" fill="#fff" stroke="#000" stroke-width="1.3"/><path d="M5 8L10 3M7 9L12 4M9 10L14 5" fill="none" stroke="#000" stroke-width="0.8" /><path d="M13 1.5V7" fill="none" stroke="#000" stroke-width="1.5" /><rect x="1.5" y="8.5" width="6.5" height="6" fill="#fff" stroke="#000" stroke-width="1.6"/><rect x="3.5" y="10.5" width="2.5" height="2.5" fill="#666" stroke="none" stroke-width="0"/></svg>
<svg class="ic" style="left:1070px;top:647px" width="16" height="16" viewBox="0 0 16 16"><rect x="1.5" y="1.5" width="6" height="6" fill="#fff" stroke="#000" stroke-width="1.5"/><path d="M2 15L14 3" fill="none" stroke="#888" stroke-width="1" /><rect x="8.5" y="8.5" width="6" height="6" fill="#fff" stroke="#000" stroke-width="1.6"/><path d="M8.5 8.5L10.5 6.5H15.5V11.5L14.5 12.5" fill="none" stroke="#000" stroke-width="1" /></svg>
<svg class="ic" style="left:1095px;top:647px" width="16" height="16" viewBox="0 0 16 16"><path d="M1.5 14V11Q3 7 8 7Q12 7 13 1" fill="none" stroke="#000" stroke-width="1.5"/><circle cx="7" cy="7" r="1.7" fill="#1010c0" stroke="none" stroke-width="0"/><path d="M9 9L14 14" fill="none" stroke="#000" stroke-width="1.6" /><path d="M9 9L13 10L10 13Z" fill="#000" stroke="#000" stroke-width="0.5"/></svg>
<svg class="ic" style="left:1120px;top:647px" width="16" height="16" viewBox="0 0 16 16"><path d="M2 11L6 2L10 11Z" fill="none" stroke="#000" stroke-width="1.3"/><path d="M6 14.5L10 5.5L14 14.5Z" fill="none" stroke="#d02020" stroke-width="1.5"/></svg>
<svg class="ic" style="left:1145px;top:647px" width="16" height="16" viewBox="0 0 16 16"><circle cx="8" cy="4.5" r="3" fill="none" stroke="#9a9a9a" stroke-width="1.3"/><path d="M1.5 14.5V11L5 9H11L14.5 11V14.5Z" fill="none" stroke="#9a9a9a" stroke-width="1.3"/><path d="M5 11H11L8 14Z" fill="#9a9a9a" stroke="none" stroke-width="0"/></svg>
<svg class="ic" style="left:1170px;top:647px" width="16" height="16" viewBox="0 0 16 16"><rect x="4.5" y="4.5" width="10" height="10" fill="none" stroke="#000" stroke-width="1.3"/><rect x="4.5" y="4.5" width="10" height="10" fill="#fff" stroke="#000" stroke-width="1.3" stroke-dasharray="1.5 1"/><rect x="7" y="7" width="5" height="5" fill="#000" stroke="none" stroke-width="0"/><path d="M1 4L4 1V7Z" fill="#000" stroke="#000" stroke-width="0.5"/><path d="M4 4H9" fill="none" stroke="#000" stroke-width="1.4" /></svg>
<svg class="ic" style="left:1194px;top:647px" width="16" height="16" viewBox="0 0 16 16"><rect x="3" y="4" width="10" height="9" fill="none" stroke="#101060" stroke-width="2"/><path d="M3 13L14 2" fill="none" stroke="#d02020" stroke-width="1.2" /><rect x="1" y="2" width="4" height="4" fill="#101060" stroke="none" stroke-width="0"/><rect x="11" y="2" width="4" height="4" fill="#101060" stroke="none" stroke-width="0"/><rect x="1" y="11" width="4" height="4" fill="#101060" stroke="none" stroke-width="0"/><rect x="11" y="11" width="4" height="4" fill="#101060" stroke="none" stroke-width="0"/><path d="M15 2V15H3" fill="none" stroke="#999" stroke-width="0.8" stroke-dasharray="1 1"/></svg>
<svg class="ic" style="left:1219px;top:647px" width="16" height="16" viewBox="0 0 16 16"><rect x="3" y="3" width="10" height="10" fill="none" stroke="#9a9a9a" stroke-width="1.5"/><path d="M8 3V13M3 8H13" fill="none" stroke="#9a9a9a" stroke-width="1.2" /><rect x="1" y="1" width="4" height="4" fill="#9a9a9a" stroke="none" stroke-width="0"/><rect x="11" y="1" width="4" height="4" fill="#9a9a9a" stroke="none" stroke-width="0"/><rect x="1" y="11" width="4" height="4" fill="#9a9a9a" stroke="none" stroke-width="0"/><rect x="11" y="11" width="4" height="4" fill="#9a9a9a" stroke="none" stroke-width="0"/><rect x="6" y="6" width="4" height="4" fill="#9a9a9a" stroke="none" stroke-width="0"/></svg>
<svg class="ic" style="left:1244px;top:647px" width="16" height="16" viewBox="0 0 16 16"><rect x="3" y="6" width="8" height="8" fill="none" stroke="#9a9a9a" stroke-width="1.5"/><path d="M11 6Q12 3 15 3" fill="none" stroke="#9a9a9a" stroke-width="1.2" /><rect x="1" y="4" width="4" height="4" fill="#9a9a9a" stroke="none" stroke-width="0"/><rect x="9" y="4" width="4" height="4" fill="#9a9a9a" stroke="none" stroke-width="0"/><rect x="1" y="12" width="4" height="4" fill="#9a9a9a" stroke="none" stroke-width="0"/><rect x="9" y="12" width="4" height="4" fill="#9a9a9a" stroke="none" stroke-width="0"/><rect x="13" y="1" width="4" height="4" fill="#9a9a9a" stroke="none" stroke-width="0"/><rect x="5" y="8" width="4" height="4" fill="#9a9a9a" stroke="none" stroke-width="0"/></svg>
<svg class="ic" style="left:1270px;top:647px" width="16" height="16" viewBox="0 0 16 16"><rect x="2" y="6" width="9" height="8" fill="none" stroke="#9a9a9a" stroke-width="1.5"/><path d="M11 6L15 2M11 10L15 6M6 10L15 6" fill="none" stroke="#9a9a9a" stroke-width="1.2" /><rect x="0" y="4" width="4" height="4" fill="#9a9a9a" stroke="none" stroke-width="0"/><rect x="0" y="12" width="4" height="4" fill="#9a9a9a" stroke="none" stroke-width="0"/><rect x="9" y="12" width="4" height="4" fill="#9a9a9a" stroke="none" stroke-width="0"/><rect x="13" y="0" width="4" height="4" fill="#9a9a9a" stroke="none" stroke-width="0"/><rect x="13" y="7" width="4" height="4" fill="#9a9a9a" stroke="none" stroke-width="0"/><rect x="5" y="8" width="4" height="4" fill="#9a9a9a" stroke="none" stroke-width="0"/></svg>
<svg class="ic" style="left:1295px;top:647px" width="16" height="16" viewBox="0 0 16 16"><path d="M1 5L4 1.5H12L9 5Z" fill="none" stroke="#9a9a9a" stroke-width="1.4"/><rect x="6.5" y="9.5" width="7" height="5.5" fill="none" stroke="#9a9a9a" stroke-width="1.5"/><path d="M10 3Q13 5 12 9M10 7L12 9L14 7" fill="none" stroke="#9a9a9a" stroke-width="1.2" /></svg>
<svg class="ic" style="left:1320px;top:647px" width="16" height="16" viewBox="0 0 16 16"><path d="M4 6L8 1.5H15L11 6Z" fill="#fff" stroke="#9a9a9a" stroke-width="1.4"/><rect x="1.5" y="8.5" width="8" height="6" fill="none" stroke="#9a9a9a" stroke-width="1.5"/><path d="M9 4H14" fill="none" stroke="#9a9a9a" stroke-width="1.2" /></svg>
<svg class="ic" style="left:1345px;top:647px" width="16" height="16" viewBox="0 0 16 16"><rect x="1.5" y="6.5" width="8" height="8" fill="none" stroke="#9a9a9a" stroke-width="1.5"/><circle cx="13" cy="5" r="2.5" fill="#9a9a9a" stroke="none" stroke-width="0"/><rect x="11" y="9" width="4" height="3" fill="#9a9a9a" stroke="none" stroke-width="0"/><rect x="3" y="0.5" width="4" height="4" fill="#9a9a9a" stroke="none" stroke-width="0"/><rect x="3" y="8.5" width="4" height="4" fill="#9a9a9a" stroke="none" stroke-width="0"/></svg>
</body></html>
